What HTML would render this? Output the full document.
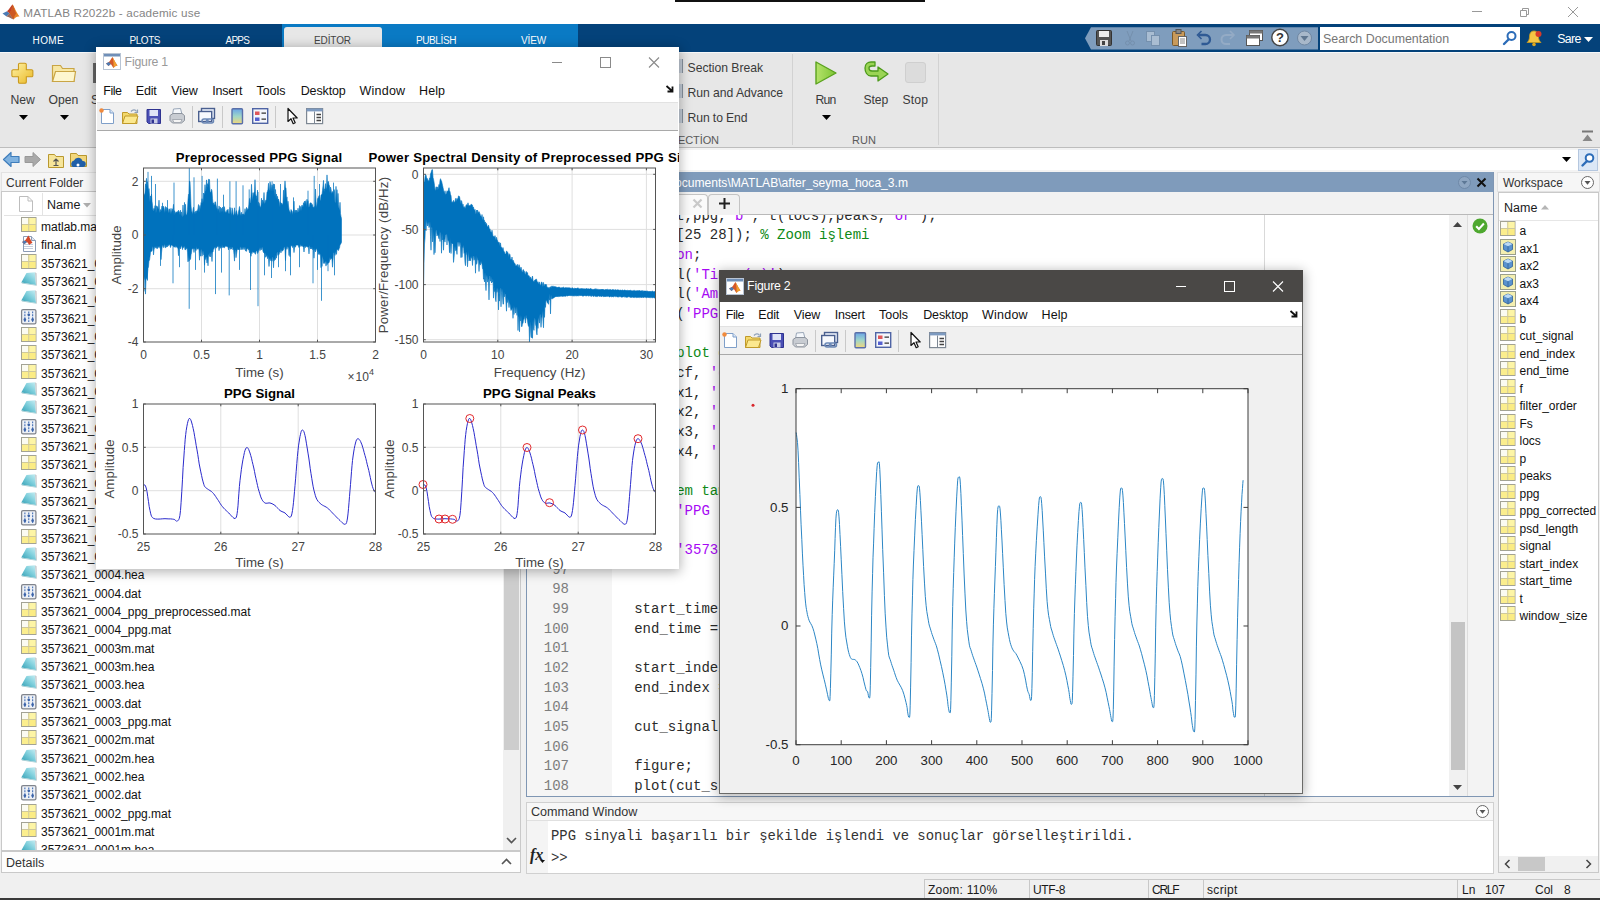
<!DOCTYPE html>
<html><head><meta charset="utf-8"><title>MATLAB R2022b - academic use</title>
<style>
html,body{margin:0;padding:0}
body{width:1600px;height:900px;overflow:hidden;position:relative;background:#f0f0f0;font-family:"Liberation Sans",sans-serif;font-size:12px;color:#1a1a1a}
.a{position:absolute}
.t{position:absolute;white-space:pre;line-height:14px}
svg{position:absolute;overflow:visible}

#titlebar{left:0;top:0;width:1600px;height:24px;background:#fff}
#tabstrip{left:0;top:24px;width:1600px;height:27.5px;background:#04427a}
#ctx{left:282px;top:24px;width:296px;height:27.5px;background:#0a7ac4}
#edtab{left:284px;top:27px;width:98px;height:24.5px;background:#e7e7e7;border-radius:3px 3px 0 0}
.tab{color:#fff}
#toolstrip{left:0;top:51.5px;width:1600px;height:94.5px;background:#e7e7e7;border-top:1px solid #f6f8fa;border-bottom:1px solid #bdbdbd;box-sizing:content-box}
.tsl{font-size:12.2px;color:#3a3a3a}
.grp{font-size:11px;color:#5a5a5a}
#addr{left:0;top:148px;width:1600px;height:24px;background:#f3f3f3}
#addrfield{left:96px;top:150px;width:1482px;height:20px;background:#fff}
#status{left:0;top:874px;width:1600px;height:24px;background:#f0f0f0}
#bottomline{left:0;top:898px;width:1600px;height:2px;background:#3a3a3a}
.sb{top:878.5px;height:19.5px;border-left:1px solid #c8c8c8;border-top:1px solid #c8c8c8;box-sizing:border-box}


.pan{background:#fff;border:1px solid #c9c9c9;box-sizing:border-box}
.phead{background:#f6f6f6;border:1px solid #e2e2e2;box-sizing:border-box}
.fn{font-size:12px;color:#111}
.code{font-family:"Liberation Mono",monospace;font-size:14px;color:#2a2a2a;line-height:16px}
.ln{font-family:"Liberation Mono",monospace;font-size:14px;color:#7d7d7d;line-height:16px;text-align:right;width:50px}
.s{color:#a709f5}.c{color:#0e8a16}
.cw{font-family:"Liberation Mono",monospace;font-size:13.88px;color:#333;line-height:16px}


.fw{box-shadow:0 2px 11px 1px rgba(0,0,0,.30);box-sizing:border-box}
.mn{font-size:12.5px;color:#111}
.tk{font-size:12px;fill:#444;font-family:"Liberation Sans",sans-serif}
.tk2{font-size:13.3px;fill:#262626;font-family:"Liberation Sans",sans-serif}
.lb{font-size:13.3px;fill:#444;font-family:"Liberation Sans",sans-serif}
.tt{font-size:13.2px;font-weight:bold;fill:#000;font-family:"Liberation Sans",sans-serif}

</style></head><body>
<div class="a" id="titlebar"></div>
<div class="a" style="left:675px;top:0;width:250px;height:2px;background:#111"></div>
<svg class="a" style="left:2px;top:4px" width="18.0" height="16.0" viewBox="0 0 18 16">
<path d="M0.5 9.5 L5 7.2 L7.5 9.3 L4.5 12.5 Z" fill="#4b7bb5"/>
<path d="M5 7.2 C7.5 5 9 2 10.5 0.5 C11.5 1.5 12.5 5 14 9 L7.5 9.3 Z" fill="#c2402a"/>
<path d="M10.5 0.5 C12 2 13.5 7 17.5 12.5 C15 12 13 13.5 11.5 15.5 C10 13.5 8.5 11.5 7.5 9.3 C9.5 7 10 3 10.5 0.5 Z" fill="#e8862a"/>
<path d="M10.5 0.5 C11.6 2.5 12.8 7 14.2 9.6 C12.8 11 12 13.5 11.5 15.5 C10 13.5 8.5 11.5 7.5 9.3 C9.5 7 10 3 10.5 0.5 Z" fill="#b5341f" opacity="0.55"/>
<path d="M4.5 12.5 L7.5 9.3 C8.5 11.5 10 13.5 11.5 15.5 C9 14.5 7 12.8 4.5 12.5Z" fill="#6a2b1a" opacity="0.7"/>
</svg>
<div class="t " style="left:23.3px;top:5.8px;font-size:11.7px;letter-spacing:0.158px;color:#858585;">MATLAB R2022b - academic use</div>
<svg class="a" style="left:1460px;top:0" width="140" height="24" viewBox="0 0 140 24">
<path d="M12 11.5H22" stroke="#999" stroke-width="1"/>
<path d="M60.5 10.5h6v6h-6zM62.5 10.5v-2h6v6h-2" stroke="#999" fill="none" stroke-width="1"/>
<path d="M108 7l10 10M118 7l-10 10" stroke="#999" stroke-width="1"/>
</svg>
<div class="a" id="tabstrip"></div><div class="a" id="ctx"></div><div class="a" id="edtab"></div>
<div class="t tab" style="left:32.6px;top:33.5px;font-size:10px;letter-spacing:0.35px;">HOME</div>
<div class="t tab" style="left:129.6px;top:33.5px;font-size:10px;letter-spacing:-0.479px;">PLOTS</div>
<div class="t tab" style="left:225.6px;top:33.5px;font-size:10px;letter-spacing:-0.822px;">APPS</div>
<div class="t tab" style="left:314px;top:33.5px;font-size:10px;letter-spacing:-0.102px;color:#444;">EDİTOR</div>
<div class="t tab" style="left:416px;top:33.5px;font-size:10px;letter-spacing:-0.4px;">PUBLİSH</div>
<div class="t tab" style="left:521px;top:33.5px;font-size:10px;letter-spacing:-0.141px;">VİEW</div>
<svg class="a" style="left:1084px;top:26px" width="234" height="24" viewBox="0 0 234 24">
<path d="M7 1.200H234V23.500H7L1 12.300Z" fill="#7f9dbd"/>
<!-- save -->
<g transform="translate(12,4)"><rect x="0.5" y="0.5" width="15" height="15" rx="1" fill="#555" stroke="#333"/><rect x="3" y="1" width="10" height="6" fill="#eee"/><rect x="4" y="10" width="8" height="6" fill="#ddd"/><rect x="6" y="11" width="3" height="4" fill="#444"/></g>
<!-- cut -->
<g transform="translate(38,4)" stroke="#7590ad" fill="none"><path d="M5 1L9 11M11 1L7 11"/><circle cx="5.5" cy="13" r="2"/><circle cx="10.5" cy="13" r="2"/></g>
<!-- copy -->
<g transform="translate(61,4)" stroke="#7590ad" fill="#a9bdd2"><rect x="1.5" y="1.5" width="8" height="10"/><rect x="6.5" y="5.5" width="8" height="10"/></g>
<!-- paste -->
<g transform="translate(87,3)"><rect x="1.5" y="2.5" width="12" height="14" rx="1" fill="#c89a5b" stroke="#7a5a2a"/><rect x="5" y="0.5" width="5" height="4" fill="#888" stroke="#555"/><rect x="7.5" y="7.5" width="8" height="10" fill="#fff" stroke="#666"/><path d="M9 10h5M9 12h5M9 14h5" stroke="#888"/></g>
<!-- undo -->
<g transform="translate(111.500,4)" fill="none" stroke="#2f5a94" stroke-width="2.300"><path d="M3 5H10A4 4 0 0 1 10 14H6"/><path d="M6 1L2 5L6 9" stroke-width="1.6"/></g>
<!-- redo -->
<g transform="translate(136,4)" fill="none" stroke="#94abc5" stroke-width="2"><path d="M13 5H6A4 4 0 0 0 6 14H10"/><path d="M10 1L14 5L10 9" stroke-width="1.6"/></g>
<!-- windows -->
<g transform="translate(162,3)"><rect x="3.5" y="1.5" width="13" height="10" fill="#fff" stroke="#555"/><rect x="3.5" y="1.5" width="13" height="3" fill="#777"/><rect x="0.5" y="6.5" width="13" height="10" fill="#fff" stroke="#555"/><rect x="0.5" y="6.5" width="13" height="3" fill="#777"/></g>
<!-- help -->
<g transform="translate(187,2.500)"><circle cx="9" cy="9" r="8.2" fill="#fff" stroke="#444" stroke-width="1.4"/><text x="9" y="13.5" font-family="Liberation Sans,sans-serif" font-weight="bold" font-size="13" text-anchor="middle" fill="#333">?</text></g>
<!-- dropdown -->
<g transform="translate(213,4.500)"><circle cx="7.5" cy="7.5" r="7" fill="#a8b8ca" stroke="#6f87a3"/><path d="M3.5 5.5h8l-4 5z" fill="#5f7690"/></g>
</svg>
<div class="a" style="left:1319.5px;top:27px;width:200px;height:22.7px;background:#fff"></div>
<div class="t" style="left:1323px;top:32px;font-size:12.4px;color:#767676">Search Documentation</div>
<svg class="a" style="left:1502px;top:30px" width="16" height="16" viewBox="0 0 16 16"><circle cx="9.5" cy="6" r="4" fill="#fff" stroke="#2c6cb8" stroke-width="2"/><path d="M6.5 9.5L2 14" stroke="#2c6cb8" stroke-width="2.4" stroke-linecap="round"/></svg>
<svg class="a" style="left:1525px;top:29px" width="20" height="20" viewBox="0 0 20 20"><path d="M9 2C5.5 2 4.5 5 4.5 8C4.5 11 3 12.5 2 13.5H16C15 12.5 13.5 11 13.5 8C13.5 5 12.5 2 9 2Z" fill="#f6c544" stroke="#c99a1c" stroke-width="0.8"/><circle cx="9" cy="15.5" r="1.8" fill="#e0a820"/><circle cx="13.5" cy="5" r="3" fill="#d83a2a"/></svg>
<div class="t " style="left:1557.2px;top:32.3px;font-size:12.3px;letter-spacing:-0.596px;color:#fff;">Sare</div>
<svg class="a" style="left:1584px;top:37px" width="9" height="5" viewBox="0 0 9 5"><path d="M0 0H9L4.5 5Z" fill="#fff"/></svg>
<div class="a" id="toolstrip"></div>
<svg class="a" style="left:10.5px;top:60.5px" width="24.5" height="24.5" viewBox="0 0 28 28"><defs><linearGradient id="gp" x1="0" y1="0" x2="1" y2="1"><stop offset="0" stop-color="#fff3a8"/><stop offset="1" stop-color="#e9b824"/></linearGradient></defs><path d="M10 2.5h6a1.5 1.5 0 0 1 1.5 1.5v6h6a1.5 1.5 0 0 1 1.5 1.5v5a1.5 1.5 0 0 1-1.5 1.5h-6v6a1.5 1.5 0 0 1-1.5 1.5h-6a1.5 1.5 0 0 1-1.5-1.5v-6h-6a1.5 1.5 0 0 1-1.5-1.5v-5a1.5 1.5 0 0 1 1.5-1.5h6v-6a1.5 1.5 0 0 1 1.5-1.5z" fill="url(#gp)" stroke="#c9981a" stroke-width="1.2"/></svg>
<div class="t tsl" style="left:10.4px;top:93px;font-size:12.2px;letter-spacing:0.07px;">New</div>
<svg class="a" style="left:18.5px;top:114.5px" width="9" height="5" viewBox="0 0 9 5"><path d="M0 0H9L4.5 5Z" fill="#000"/></svg>
<svg class="a" style="left:51px;top:62px" width="26" height="22" viewBox="0 0 26 22"><path d="M1.5 3.5h8l2 3h11.5v13h-21.5z" fill="#f7e7a4" stroke="#c9a545" stroke-width="1.2"/><path d="M1.5 19.5l3-10h20l-1.5 10z" fill="#fdf6cf" stroke="#c9a545" stroke-width="1.2"/></svg>
<div class="t tsl" style="left:48.6px;top:93px;font-size:12.2px;letter-spacing:-0.007px;">Open</div>
<svg class="a" style="left:59.5px;top:114.5px" width="9" height="5" viewBox="0 0 9 5"><path d="M0 0H9L4.5 5Z" fill="#000"/></svg>
<div class="a" style="left:93px;top:63px;width:3px;height:20px;background:#666"></div>
<div class="t tsl" style="left:91px;top:93px">S</div>
<div class="a" style="left:679px;top:59px;width:3px;height:14px;background:#c3ccd8;border-right:1px solid #8893a0"></div>
<div class="a" style="left:679px;top:84px;width:3px;height:14px;background:#c3ccd8;border-right:1px solid #8893a0"></div>
<div class="a" style="left:679px;top:109px;width:3px;height:14px;background:#c3ccd8;border-right:1px solid #8893a0"></div>
<div class="t tsl" style="left:687.6px;top:61px;font-size:12.2px;letter-spacing:-0.037px;">Section Break</div>
<div class="t tsl" style="left:687.6px;top:86px;font-size:12.2px;letter-spacing:-0.056px;">Run and Advance</div>
<div class="t tsl" style="left:687.6px;top:111px;font-size:12.2px;letter-spacing:-0.118px;">Run to End</div>
<div class="t grp" style="left:678px;top:132.5px;letter-spacing:-0.1px">ECTİON</div>
<div class="a" style="left:792px;top:54px;width:1px;height:91px;background:#d2d2d2"></div>
<svg class="a" style="left:814px;top:60px" width="24" height="26" viewBox="0 0 24 26"><defs><linearGradient id="gg" x1="0" y1="0" x2="1" y2="0"><stop offset="0" stop-color="#b5e36a"/><stop offset="1" stop-color="#7dc434"/></linearGradient></defs><path d="M2 2L22 13L2 24Z" fill="url(#gg)" stroke="#5aa21e" stroke-width="1.4" stroke-linejoin="round"/></svg>
<div class="t tsl" style="left:815.6px;top:93px;font-size:12.2px;letter-spacing:-0.786px;">Run</div>
<svg class="a" style="left:821.5px;top:114.5px" width="9" height="5" viewBox="0 0 9 5"><path d="M0 0H9L4.5 5Z" fill="#000"/></svg>
<svg class="a" style="left:862px;top:60px" width="28" height="24" viewBox="0 0 28 24"><path d="M3 8C3 4 6 2 9 2H13V6H10C8 6 7 7 7 8C7 10 8 11 10 11H16V7L26 14L16 21V16H9C5 16 3 12 3 8Z" fill="#9bd455" stroke="#4d9a1c" stroke-width="1.3" stroke-linejoin="round"/></svg>
<div class="t tsl" style="left:863.6px;top:93px;font-size:12.2px;letter-spacing:-0.17px;">Step</div>
<div class="a" style="left:905px;top:62px;width:21px;height:21px;border-radius:3px;background:#dcdcdc;border:1px solid #cfcfcf;box-sizing:border-box"></div>
<div class="t tsl" style="left:902.6px;top:93px;font-size:12.2px;letter-spacing:0.08px;">Stop</div>
<div class="t grp" style="left:852px;top:133px">RUN</div>
<div class="a" style="left:938px;top:54px;width:1px;height:91px;background:#d2d2d2"></div>
<svg class="a" style="left:1581px;top:130px" width="13" height="13" viewBox="0 0 13 13"><path d="M1 1.5h11" stroke="#777" stroke-width="2"/><path d="M1.5 11L6.5 4.5L11.5 11Z" fill="#888"/></svg>
<div class="a" id="addr"></div><div class="a" id="addrfield"></div>
<svg class="a" style="left:2px;top:150px" width="92" height="20" viewBox="0 0 92 20">
<path d="M1.5 9.5L9 2.5V6.5H17V12.5H9V16.5Z" fill="#7fb2e0" stroke="#3f7dbb" stroke-width="1.2" stroke-linejoin="round"/>
<path d="M38.500 9.5L31 2.500V6.500H23V12.500H31V16.500Z" fill="#a9a9a9" stroke="#999" stroke-width="1"/>
<g transform="translate(46,2)"><path d="M0.500 2.500h6l1.500 2h7.500v11h-15z" fill="#f6e59a" stroke="#b9982f"/><path d="M8 7v6M5.500 9.500L8 7l2.500 2.500M5.500 13.500h5" stroke="#555" fill="none" stroke-width="1.200"/></g>
<g transform="translate(68,1)"><path d="M0.500 2.500h6l1.500 2h8.500v11h-16z" fill="#f2d77c" stroke="#b9982f"/><path d="M3 16a3.500 3.500 0 0 1 1-6.500a4.500 4.500 0 0 1 8.500 0.500a3 3 0 0 1 0.500 6z" fill="#1f5fa8"/><circle cx="8" cy="14" r="1.500" fill="#fff"/></g>
</svg>
<svg class="a" style="left:1562px;top:157px" width="9" height="5" viewBox="0 0 9 5"><path d="M0 0H9L4.5 5Z" fill="#000"/></svg>
<div class="a" style="left:1578px;top:149px;width:20px;height:22px;background:#dbe7f6;border:1px solid #b5c7df;box-sizing:border-box"></div>
<svg class="a" style="left:1580px;top:152px" width="16" height="16" viewBox="0 0 16 16"><circle cx="9.500" cy="6" r="3.800" fill="#fff" stroke="#2c6cb8" stroke-width="2"/><path d="M6.500 9.500L2.500 13.500" stroke="#2c6cb8" stroke-width="2.400" stroke-linecap="round"/></svg>
<div class="a" id="status"></div>
<div class="a sb" style="left:924px;width:105px"></div>
<div class="t " style="left:928px;top:883px;font-size:12px;letter-spacing:0.224px;">Zoom: 110%</div>
<div class="a sb" style="left:1029px;width:119px"></div>
<div class="t " style="left:1033px;top:883px;font-size:12px;letter-spacing:-0.4px;">UTF-8</div>
<div class="a sb" style="left:1148px;width:55px"></div>
<div class="t " style="left:1152px;top:883px;font-size:12px;letter-spacing:-1.286px;">CRLF</div>
<div class="a sb" style="left:1203px;width:254px"></div>
<div class="t " style="left:1207px;top:883px;font-size:12px;letter-spacing:0.321px;">script</div>
<div class="a sb" style="left:1457px;width:143px"></div>
<div class="t" style="left:1462px;top:883px">Ln</div><div class="t" style="left:1485px;top:883px">107</div><div class="t" style="left:1535px;top:883px">Col</div><div class="t" style="left:1564px;top:883px">8</div>
<div class="a" id="bottomline"></div>
<svg class="a" width="0" height="0"><defs><linearGradient id="hg" x1="1" y1="0" x2="0" y2="1"><stop offset="0" stop-color="#c9eef3"/><stop offset="0.450" stop-color="#7fcfdc"/><stop offset="1" stop-color="#2f9db3"/></linearGradient></defs></svg>
<div class="a phead" style="left:1px;top:172px;width:520px;height:20px"></div>
<div class="t" style="left:6px;top:176px;font-size:12px;color:#333">Current Folder</div>
<div class="a pan" style="left:1px;top:191px;width:520px;height:660px"></div>
<div class="a" style="left:4px;top:215px;width:499px;height:1px;background:#e3e3e3"></div>
<div class="a" style="left:42px;top:193px;width:1px;height:22px;background:#e3e3e3"></div>
<svg class="a" style="left:19px;top:196px" width="14" height="16" viewBox="0 0 14 16"><path d="M0.500 0.500h8.500l4.500 4.500v10.500h-13z" fill="#fff" stroke="#bdbdbd"/><path d="M9 0.500v4.500h4.500" fill="none" stroke="#bdbdbd"/></svg>
<div class="t" style="left:47px;top:198px;font-size:12.5px">Name</div>
<svg class="a" style="left:83px;top:203px" width="8" height="5" viewBox="0 0 8 5"><path d="M0 0h8l-4 4.500z" fill="#b0b0b0"/></svg>
<div class="a" style="left:4px;top:216px;width:499px;height:634px;overflow:hidden">
<svg class="a" style="left:17px;top:1.0px" width="15.5" height="15" viewBox="0 0 15.5 15"><rect x="0.5" y="0.5" width="14.5" height="14" fill="#fbef96" stroke="#a3a394"/><rect x="1" y="1" width="6.200" height="6" fill="#fbfbf2"/><rect x="8.300" y="1" width="6.200" height="6" fill="#fdf5a6"/><rect x="1" y="8" width="6.200" height="6" fill="#fbee8e"/><rect x="8.300" y="8" width="6.200" height="6" fill="#fbec84"/><path d="M7.750 1V14M1 7.500H14.500" stroke="#cfc99c" stroke-width="1"/></svg>
<div class="t fn" style="left:37px;top:3.9px">matlab.mat</div>
<svg class="a" style="left:17px;top:19.3px" width="16" height="17" viewBox="0 0 16 17"><path d="M2.500 1.500h8l4 4v11h-12z" fill="#fff" stroke="#8b9bb5"/><path d="M10.500 1.500v4h4" fill="#dfe6f2" stroke="#8b9bb5"/><path d="M3 11.500h9M3 13.500h9M3 9.500h9" stroke="#c5cedd"/><path d="M1 7L4 5.500C5.500 4 6.500 1.500 7.500 0.500C8.500 2 9.500 5 11.500 8C10 8 9 9 8.500 10C7.500 9 6.500 7.500 6 7L3.500 9Z" fill="#d4482a"/><path d="M1 7L4 5.500L6 7L3.500 9Z" fill="#4b7bb5"/></svg>
<div class="t fn" style="left:37px;top:22.2px">final.m</div>
<svg class="a" style="left:17px;top:37.7px" width="15.5" height="15" viewBox="0 0 15.5 15"><rect x="0.5" y="0.5" width="14.5" height="14" fill="#fbef96" stroke="#a3a394"/><rect x="1" y="1" width="6.200" height="6" fill="#fbfbf2"/><rect x="8.300" y="1" width="6.200" height="6" fill="#fdf5a6"/><rect x="1" y="8" width="6.200" height="6" fill="#fbee8e"/><rect x="8.300" y="8" width="6.200" height="6" fill="#fbec84"/><path d="M7.750 1V14M1 7.500H14.500" stroke="#cfc99c" stroke-width="1"/></svg>
<div class="t fn" style="left:37px;top:40.6px">3573621_0007m.mat</div>
<svg class="a" style="left:17px;top:56.0px" width="16" height="15" viewBox="0 0 16 15"><path d="M5.500 1L14 0.300L15 13L0.300 10.500Z" fill="url(#hg)"/><path d="M14 0.300L15.600 1.200L15.900 13.800L15 13Z" fill="#c4c9cc"/><path d="M0.300 10.500L15 13L15.900 13.800L1 11.500Z" fill="#9fc9d0"/></svg>
<div class="t fn" style="left:37px;top:58.9px">3573621_0007m.hea</div>
<svg class="a" style="left:17px;top:74.3px" width="16" height="15" viewBox="0 0 16 15"><path d="M5.500 1L14 0.300L15 13L0.300 10.500Z" fill="url(#hg)"/><path d="M14 0.300L15.600 1.200L15.900 13.800L15 13Z" fill="#c4c9cc"/><path d="M0.300 10.500L15 13L15.900 13.800L1 11.500Z" fill="#9fc9d0"/></svg>
<div class="t fn" style="left:37px;top:77.2px">3573621_0007.hea</div>
<svg class="a" style="left:17px;top:92.6px" width="15.5" height="15.5" viewBox="0 0 16 16"><rect x="0.6" y="0.6" width="14.800" height="14.800" rx="1.500" fill="#eef1f6" stroke="#80848c" stroke-width="1.300"/><path d="M4 2.500v11M8 2.500v11M12 2.500v11" stroke="#4a74b8" stroke-width="1.200" stroke-dasharray="2 1"/><circle cx="4" cy="11" r="1.400" fill="#3a62a8"/><circle cx="8" cy="6" r="1.400" fill="#3a62a8"/><circle cx="12" cy="11" r="1.400" fill="#3a62a8"/></svg>
<div class="t fn" style="left:37px;top:95.5px">3573621_0007.dat</div>
<svg class="a" style="left:17px;top:111.0px" width="15.5" height="15" viewBox="0 0 15.5 15"><rect x="0.5" y="0.5" width="14.5" height="14" fill="#fbef96" stroke="#a3a394"/><rect x="1" y="1" width="6.200" height="6" fill="#fbfbf2"/><rect x="8.300" y="1" width="6.200" height="6" fill="#fdf5a6"/><rect x="1" y="8" width="6.200" height="6" fill="#fbee8e"/><rect x="8.300" y="8" width="6.200" height="6" fill="#fbec84"/><path d="M7.750 1V14M1 7.500H14.500" stroke="#cfc99c" stroke-width="1"/></svg>
<div class="t fn" style="left:37px;top:113.9px">3573621_0007_ppg.mat</div>
<svg class="a" style="left:17px;top:129.3px" width="15.5" height="15" viewBox="0 0 15.5 15"><rect x="0.5" y="0.5" width="14.5" height="14" fill="#fbef96" stroke="#a3a394"/><rect x="1" y="1" width="6.200" height="6" fill="#fbfbf2"/><rect x="8.300" y="1" width="6.200" height="6" fill="#fdf5a6"/><rect x="1" y="8" width="6.200" height="6" fill="#fbee8e"/><rect x="8.300" y="8" width="6.200" height="6" fill="#fbec84"/><path d="M7.750 1V14M1 7.500H14.500" stroke="#cfc99c" stroke-width="1"/></svg>
<div class="t fn" style="left:37px;top:132.2px">3573621_0006m.mat</div>
<svg class="a" style="left:17px;top:147.6px" width="15.5" height="15" viewBox="0 0 15.5 15"><rect x="0.5" y="0.5" width="14.5" height="14" fill="#fbef96" stroke="#a3a394"/><rect x="1" y="1" width="6.200" height="6" fill="#fbfbf2"/><rect x="8.300" y="1" width="6.200" height="6" fill="#fdf5a6"/><rect x="1" y="8" width="6.200" height="6" fill="#fbee8e"/><rect x="8.300" y="8" width="6.200" height="6" fill="#fbec84"/><path d="M7.750 1V14M1 7.500H14.500" stroke="#cfc99c" stroke-width="1"/></svg>
<div class="t fn" style="left:37px;top:150.5px">3573621_0006_ppg.mat</div>
<svg class="a" style="left:17px;top:166.0px" width="16" height="15" viewBox="0 0 16 15"><path d="M5.500 1L14 0.300L15 13L0.300 10.500Z" fill="url(#hg)"/><path d="M14 0.300L15.600 1.200L15.900 13.800L15 13Z" fill="#c4c9cc"/><path d="M0.300 10.500L15 13L15.900 13.800L1 11.500Z" fill="#9fc9d0"/></svg>
<div class="t fn" style="left:37px;top:168.9px">3573621_0006m.hea</div>
<svg class="a" style="left:17px;top:184.3px" width="16" height="15" viewBox="0 0 16 15"><path d="M5.500 1L14 0.300L15 13L0.300 10.500Z" fill="url(#hg)"/><path d="M14 0.300L15.600 1.200L15.900 13.800L15 13Z" fill="#c4c9cc"/><path d="M0.300 10.500L15 13L15.900 13.800L1 11.500Z" fill="#9fc9d0"/></svg>
<div class="t fn" style="left:37px;top:187.2px">3573621_0006.hea</div>
<svg class="a" style="left:17px;top:202.6px" width="15.5" height="15.5" viewBox="0 0 16 16"><rect x="0.6" y="0.6" width="14.800" height="14.800" rx="1.500" fill="#eef1f6" stroke="#80848c" stroke-width="1.300"/><path d="M4 2.500v11M8 2.500v11M12 2.500v11" stroke="#4a74b8" stroke-width="1.200" stroke-dasharray="2 1"/><circle cx="4" cy="11" r="1.400" fill="#3a62a8"/><circle cx="8" cy="6" r="1.400" fill="#3a62a8"/><circle cx="12" cy="11" r="1.400" fill="#3a62a8"/></svg>
<div class="t fn" style="left:37px;top:205.5px">3573621_0006.dat</div>
<svg class="a" style="left:17px;top:221.0px" width="15.5" height="15" viewBox="0 0 15.5 15"><rect x="0.5" y="0.5" width="14.5" height="14" fill="#fbef96" stroke="#a3a394"/><rect x="1" y="1" width="6.200" height="6" fill="#fbfbf2"/><rect x="8.300" y="1" width="6.200" height="6" fill="#fdf5a6"/><rect x="1" y="8" width="6.200" height="6" fill="#fbee8e"/><rect x="8.300" y="8" width="6.200" height="6" fill="#fbec84"/><path d="M7.750 1V14M1 7.500H14.500" stroke="#cfc99c" stroke-width="1"/></svg>
<div class="t fn" style="left:37px;top:223.9px">3573621_0005m.mat</div>
<svg class="a" style="left:17px;top:239.3px" width="15.5" height="15" viewBox="0 0 15.5 15"><rect x="0.5" y="0.5" width="14.5" height="14" fill="#fbef96" stroke="#a3a394"/><rect x="1" y="1" width="6.200" height="6" fill="#fbfbf2"/><rect x="8.300" y="1" width="6.200" height="6" fill="#fdf5a6"/><rect x="1" y="8" width="6.200" height="6" fill="#fbee8e"/><rect x="8.300" y="8" width="6.200" height="6" fill="#fbec84"/><path d="M7.750 1V14M1 7.500H14.500" stroke="#cfc99c" stroke-width="1"/></svg>
<div class="t fn" style="left:37px;top:242.2px">3573621_0005_ppg.mat</div>
<svg class="a" style="left:17px;top:257.6px" width="16" height="15" viewBox="0 0 16 15"><path d="M5.500 1L14 0.300L15 13L0.300 10.500Z" fill="url(#hg)"/><path d="M14 0.300L15.600 1.200L15.900 13.800L15 13Z" fill="#c4c9cc"/><path d="M0.300 10.500L15 13L15.900 13.800L1 11.500Z" fill="#9fc9d0"/></svg>
<div class="t fn" style="left:37px;top:260.5px">3573621_0005m.hea</div>
<svg class="a" style="left:17px;top:275.9px" width="16" height="15" viewBox="0 0 16 15"><path d="M5.500 1L14 0.300L15 13L0.300 10.500Z" fill="url(#hg)"/><path d="M14 0.300L15.600 1.200L15.900 13.800L15 13Z" fill="#c4c9cc"/><path d="M0.300 10.500L15 13L15.900 13.800L1 11.500Z" fill="#9fc9d0"/></svg>
<div class="t fn" style="left:37px;top:278.9px">3573621_0005.hea</div>
<svg class="a" style="left:17px;top:294.3px" width="15.5" height="15.5" viewBox="0 0 16 16"><rect x="0.6" y="0.6" width="14.800" height="14.800" rx="1.500" fill="#eef1f6" stroke="#80848c" stroke-width="1.300"/><path d="M4 2.500v11M8 2.500v11M12 2.500v11" stroke="#4a74b8" stroke-width="1.200" stroke-dasharray="2 1"/><circle cx="4" cy="11" r="1.400" fill="#3a62a8"/><circle cx="8" cy="6" r="1.400" fill="#3a62a8"/><circle cx="12" cy="11" r="1.400" fill="#3a62a8"/></svg>
<div class="t fn" style="left:37px;top:297.2px">3573621_0005.dat</div>
<svg class="a" style="left:17px;top:312.6px" width="15.5" height="15" viewBox="0 0 15.5 15"><rect x="0.5" y="0.5" width="14.5" height="14" fill="#fbef96" stroke="#a3a394"/><rect x="1" y="1" width="6.200" height="6" fill="#fbfbf2"/><rect x="8.300" y="1" width="6.200" height="6" fill="#fdf5a6"/><rect x="1" y="8" width="6.200" height="6" fill="#fbee8e"/><rect x="8.300" y="8" width="6.200" height="6" fill="#fbec84"/><path d="M7.750 1V14M1 7.500H14.500" stroke="#cfc99c" stroke-width="1"/></svg>
<div class="t fn" style="left:37px;top:315.5px">3573621_0004m.mat</div>
<svg class="a" style="left:17px;top:330.9px" width="16" height="15" viewBox="0 0 16 15"><path d="M5.500 1L14 0.300L15 13L0.300 10.500Z" fill="url(#hg)"/><path d="M14 0.300L15.600 1.200L15.900 13.800L15 13Z" fill="#c4c9cc"/><path d="M0.300 10.500L15 13L15.900 13.800L1 11.500Z" fill="#9fc9d0"/></svg>
<div class="t fn" style="left:37px;top:333.8px">3573621_0004m.hea</div>
<svg class="a" style="left:17px;top:349.3px" width="16" height="15" viewBox="0 0 16 15"><path d="M5.500 1L14 0.300L15 13L0.300 10.500Z" fill="url(#hg)"/><path d="M14 0.300L15.600 1.200L15.900 13.800L15 13Z" fill="#c4c9cc"/><path d="M0.300 10.500L15 13L15.900 13.800L1 11.500Z" fill="#9fc9d0"/></svg>
<div class="t fn" style="left:37px;top:352.2px">3573621_0004.hea</div>
<svg class="a" style="left:17px;top:367.6px" width="15.5" height="15.5" viewBox="0 0 16 16"><rect x="0.6" y="0.6" width="14.800" height="14.800" rx="1.500" fill="#eef1f6" stroke="#80848c" stroke-width="1.300"/><path d="M4 2.500v11M8 2.500v11M12 2.500v11" stroke="#4a74b8" stroke-width="1.200" stroke-dasharray="2 1"/><circle cx="4" cy="11" r="1.400" fill="#3a62a8"/><circle cx="8" cy="6" r="1.400" fill="#3a62a8"/><circle cx="12" cy="11" r="1.400" fill="#3a62a8"/></svg>
<div class="t fn" style="left:37px;top:370.5px">3573621_0004.dat</div>
<svg class="a" style="left:17px;top:385.9px" width="15.5" height="15" viewBox="0 0 15.5 15"><rect x="0.5" y="0.5" width="14.5" height="14" fill="#fbef96" stroke="#a3a394"/><rect x="1" y="1" width="6.200" height="6" fill="#fbfbf2"/><rect x="8.300" y="1" width="6.200" height="6" fill="#fdf5a6"/><rect x="1" y="8" width="6.200" height="6" fill="#fbee8e"/><rect x="8.300" y="8" width="6.200" height="6" fill="#fbec84"/><path d="M7.750 1V14M1 7.500H14.500" stroke="#cfc99c" stroke-width="1"/></svg>
<div class="t fn" style="left:37px;top:388.8px">3573621_0004_ppg_preprocessed.mat</div>
<svg class="a" style="left:17px;top:404.3px" width="15.5" height="15" viewBox="0 0 15.5 15"><rect x="0.5" y="0.5" width="14.5" height="14" fill="#fbef96" stroke="#a3a394"/><rect x="1" y="1" width="6.200" height="6" fill="#fbfbf2"/><rect x="8.300" y="1" width="6.200" height="6" fill="#fdf5a6"/><rect x="1" y="8" width="6.200" height="6" fill="#fbee8e"/><rect x="8.300" y="8" width="6.200" height="6" fill="#fbec84"/><path d="M7.750 1V14M1 7.500H14.500" stroke="#cfc99c" stroke-width="1"/></svg>
<div class="t fn" style="left:37px;top:407.2px">3573621_0004_ppg.mat</div>
<svg class="a" style="left:17px;top:422.6px" width="15.5" height="15" viewBox="0 0 15.5 15"><rect x="0.5" y="0.5" width="14.5" height="14" fill="#fbef96" stroke="#a3a394"/><rect x="1" y="1" width="6.200" height="6" fill="#fbfbf2"/><rect x="8.300" y="1" width="6.200" height="6" fill="#fdf5a6"/><rect x="1" y="8" width="6.200" height="6" fill="#fbee8e"/><rect x="8.300" y="8" width="6.200" height="6" fill="#fbec84"/><path d="M7.750 1V14M1 7.500H14.500" stroke="#cfc99c" stroke-width="1"/></svg>
<div class="t fn" style="left:37px;top:425.5px">3573621_0003m.mat</div>
<svg class="a" style="left:17px;top:440.9px" width="16" height="15" viewBox="0 0 16 15"><path d="M5.500 1L14 0.300L15 13L0.300 10.500Z" fill="url(#hg)"/><path d="M14 0.300L15.600 1.200L15.900 13.800L15 13Z" fill="#c4c9cc"/><path d="M0.300 10.500L15 13L15.900 13.800L1 11.500Z" fill="#9fc9d0"/></svg>
<div class="t fn" style="left:37px;top:443.8px">3573621_0003m.hea</div>
<svg class="a" style="left:17px;top:459.2px" width="16" height="15" viewBox="0 0 16 15"><path d="M5.500 1L14 0.300L15 13L0.300 10.500Z" fill="url(#hg)"/><path d="M14 0.300L15.600 1.200L15.900 13.800L15 13Z" fill="#c4c9cc"/><path d="M0.300 10.500L15 13L15.900 13.800L1 11.500Z" fill="#9fc9d0"/></svg>
<div class="t fn" style="left:37px;top:462.1px">3573621_0003.hea</div>
<svg class="a" style="left:17px;top:477.6px" width="15.5" height="15.5" viewBox="0 0 16 16"><rect x="0.6" y="0.6" width="14.800" height="14.800" rx="1.500" fill="#eef1f6" stroke="#80848c" stroke-width="1.300"/><path d="M4 2.500v11M8 2.500v11M12 2.500v11" stroke="#4a74b8" stroke-width="1.200" stroke-dasharray="2 1"/><circle cx="4" cy="11" r="1.400" fill="#3a62a8"/><circle cx="8" cy="6" r="1.400" fill="#3a62a8"/><circle cx="12" cy="11" r="1.400" fill="#3a62a8"/></svg>
<div class="t fn" style="left:37px;top:480.5px">3573621_0003.dat</div>
<svg class="a" style="left:17px;top:495.9px" width="15.5" height="15" viewBox="0 0 15.5 15"><rect x="0.5" y="0.5" width="14.5" height="14" fill="#fbef96" stroke="#a3a394"/><rect x="1" y="1" width="6.200" height="6" fill="#fbfbf2"/><rect x="8.300" y="1" width="6.200" height="6" fill="#fdf5a6"/><rect x="1" y="8" width="6.200" height="6" fill="#fbee8e"/><rect x="8.300" y="8" width="6.200" height="6" fill="#fbec84"/><path d="M7.750 1V14M1 7.500H14.500" stroke="#cfc99c" stroke-width="1"/></svg>
<div class="t fn" style="left:37px;top:498.8px">3573621_0003_ppg.mat</div>
<svg class="a" style="left:17px;top:514.2px" width="15.5" height="15" viewBox="0 0 15.5 15"><rect x="0.5" y="0.5" width="14.5" height="14" fill="#fbef96" stroke="#a3a394"/><rect x="1" y="1" width="6.200" height="6" fill="#fbfbf2"/><rect x="8.300" y="1" width="6.200" height="6" fill="#fdf5a6"/><rect x="1" y="8" width="6.200" height="6" fill="#fbee8e"/><rect x="8.300" y="8" width="6.200" height="6" fill="#fbec84"/><path d="M7.750 1V14M1 7.500H14.500" stroke="#cfc99c" stroke-width="1"/></svg>
<div class="t fn" style="left:37px;top:517.1px">3573621_0002m.mat</div>
<svg class="a" style="left:17px;top:532.6px" width="16" height="15" viewBox="0 0 16 15"><path d="M5.500 1L14 0.300L15 13L0.300 10.500Z" fill="url(#hg)"/><path d="M14 0.300L15.600 1.200L15.900 13.800L15 13Z" fill="#c4c9cc"/><path d="M0.300 10.500L15 13L15.900 13.800L1 11.500Z" fill="#9fc9d0"/></svg>
<div class="t fn" style="left:37px;top:535.5px">3573621_0002m.hea</div>
<svg class="a" style="left:17px;top:550.9px" width="16" height="15" viewBox="0 0 16 15"><path d="M5.500 1L14 0.300L15 13L0.300 10.500Z" fill="url(#hg)"/><path d="M14 0.300L15.600 1.200L15.900 13.800L15 13Z" fill="#c4c9cc"/><path d="M0.300 10.500L15 13L15.900 13.800L1 11.500Z" fill="#9fc9d0"/></svg>
<div class="t fn" style="left:37px;top:553.8px">3573621_0002.hea</div>
<svg class="a" style="left:17px;top:569.2px" width="15.5" height="15.5" viewBox="0 0 16 16"><rect x="0.6" y="0.6" width="14.800" height="14.800" rx="1.500" fill="#eef1f6" stroke="#80848c" stroke-width="1.300"/><path d="M4 2.500v11M8 2.500v11M12 2.500v11" stroke="#4a74b8" stroke-width="1.200" stroke-dasharray="2 1"/><circle cx="4" cy="11" r="1.400" fill="#3a62a8"/><circle cx="8" cy="6" r="1.400" fill="#3a62a8"/><circle cx="12" cy="11" r="1.400" fill="#3a62a8"/></svg>
<div class="t fn" style="left:37px;top:572.1px">3573621_0002.dat</div>
<svg class="a" style="left:17px;top:587.6px" width="15.5" height="15" viewBox="0 0 15.5 15"><rect x="0.5" y="0.5" width="14.5" height="14" fill="#fbef96" stroke="#a3a394"/><rect x="1" y="1" width="6.200" height="6" fill="#fbfbf2"/><rect x="8.300" y="1" width="6.200" height="6" fill="#fdf5a6"/><rect x="1" y="8" width="6.200" height="6" fill="#fbee8e"/><rect x="8.300" y="8" width="6.200" height="6" fill="#fbec84"/><path d="M7.750 1V14M1 7.500H14.500" stroke="#cfc99c" stroke-width="1"/></svg>
<div class="t fn" style="left:37px;top:590.5px">3573621_0002_ppg.mat</div>
<svg class="a" style="left:17px;top:605.9px" width="15.5" height="15" viewBox="0 0 15.5 15"><rect x="0.5" y="0.5" width="14.5" height="14" fill="#fbef96" stroke="#a3a394"/><rect x="1" y="1" width="6.200" height="6" fill="#fbfbf2"/><rect x="8.300" y="1" width="6.200" height="6" fill="#fdf5a6"/><rect x="1" y="8" width="6.200" height="6" fill="#fbee8e"/><rect x="8.300" y="8" width="6.200" height="6" fill="#fbec84"/><path d="M7.750 1V14M1 7.500H14.500" stroke="#cfc99c" stroke-width="1"/></svg>
<div class="t fn" style="left:37px;top:608.8px">3573621_0001m.mat</div>
<svg class="a" style="left:17px;top:624.2px" width="16" height="15" viewBox="0 0 16 15"><path d="M5.500 1L14 0.300L15 13L0.300 10.500Z" fill="url(#hg)"/><path d="M14 0.300L15.600 1.200L15.900 13.800L15 13Z" fill="#c4c9cc"/><path d="M0.300 10.500L15 13L15.900 13.800L1 11.500Z" fill="#9fc9d0"/></svg>
<div class="t fn" style="left:37px;top:627.1px">3573621_0001m.hea</div>
</div>
<div class="a" style="left:503px;top:192px;width:17px;height:658px;background:#f0f0f0"></div>
<div class="a" style="left:503.5px;top:192px;width:15px;height:558px;background:#cdcdcd"></div>
<svg class="a" style="left:506px;top:837px" width="11" height="7" viewBox="0 0 11 7"><path d="M1 1l4.500 4.500L10 1" fill="none" stroke="#555" stroke-width="1.600"/></svg>
<div class="a" style="left:1px;top:851px;width:520px;height:22px;background:#fdfdfd;border:1px solid #c9c9c9;box-sizing:border-box"></div>
<div class="t" style="left:6px;top:856px;font-size:12.5px;color:#333">Details</div>
<svg class="a" style="left:501px;top:858px" width="11" height="7" viewBox="0 0 11 7"><path d="M1 6l4.500-4.500L10 6" fill="none" stroke="#555" stroke-width="1.600"/></svg>
<div class="a" style="left:526px;top:172px;width:968px;height:625px;background:#fff;border:1px solid #7f96b3;box-sizing:border-box"></div>
<div class="a" style="left:526px;top:172px;width:967px;height:20px;background:#7f9bbb"></div>
<div class="t" style="right:692px;top:176px;font-size:12.1px;color:#fff">Editor - C:\Users\Sare\Documents\MATLAB\after_seyma_hoca_3.m</div>
<svg class="a" style="left:1457px;top:175px" width="32" height="15" viewBox="0 0 32 15"><circle cx="7.500" cy="7.500" r="6" fill="#8ea6c2" stroke="#6f89a8"/><path d="M4.500 6h6l-3 3.500z" fill="#5d7896"/><path d="M20.500 3.500l8 8M28.500 3.500l-8 8" stroke="#111" stroke-width="2"/></svg>
<div class="a" style="left:527px;top:192px;width:966px;height:22px;background:#f2f2f2"></div>
<div class="a" style="left:527px;top:214px;width:966px;height:1px;background:#b9b9b9"></div>
<div class="a" style="left:540px;top:194px;width:168px;height:21px;background:#fafafa;border:1px solid #c4c4c4;border-bottom:none;border-radius:4px 4px 0 0;box-sizing:border-box"></div>
<div class="t" style="left:548px;top:198px;font-size:12.5px">after_seyma_hoca_3.m</div>
<svg class="a" style="left:692px;top:198px" width="11" height="11" viewBox="0 0 11 11"><path d="M1.500 1.500l8 8M9.500 1.500l-8 8" stroke="#c9c9c9" stroke-width="2.200"/></svg>
<div class="a" style="left:708px;top:194px;width:32px;height:21px;background:#f2f2f2;border:1px solid #c4c4c4;border-bottom:none;border-radius:4px 4px 0 0;box-sizing:border-box"></div>
<svg class="a" style="left:717.5px;top:197px" width="13" height="13" viewBox="0 0 13 13"><path d="M6.500 1v11M1 6.500h11" stroke="#222" stroke-width="2"/></svg>
<div class="a" style="left:527px;top:215px;width:85px;height:581px;background:#f5f5f5"></div>
<div class="a" style="left:1264px;top:215px;width:1px;height:581px;background:#d9d9d9"></div>
<div class="a" style="left:527px;top:215px;width:922px;height:581px;overflow:hidden">
<div class="t ln" style="left:-8px;top:-27.2px">78</div>
<div class="t ln" style="left:-8px;top:-7.5px">79</div>
<div class="t code" style="left:107.2px;top:-7.5px">plot(t,ppg,<span class="s">'b'</span>, t(locs),peaks,<span class="s">'or'</span>);</div>
<div class="t ln" style="left:-8px;top:12.1px">80</div>
<div class="t code" style="left:107.2px;top:12.1px">xlim([25 28]); <span class="c">% Zoom işlemi</span></div>
<div class="t ln" style="left:-8px;top:31.8px">81</div>
<div class="t code" style="left:107.2px;top:31.8px">grid <span class="s">on</span>;</div>
<div class="t ln" style="left:-8px;top:51.5px">82</div>
<div class="t code" style="left:107.2px;top:51.5px">xlabel(<span class="s">'Time (s)'</span>);</div>
<div class="t ln" style="left:-8px;top:71.1px">83</div>
<div class="t code" style="left:107.2px;top:71.1px">ylabel(<span class="s">'Amplitude'</span>);</div>
<div class="t ln" style="left:-8px;top:90.8px">84</div>
<div class="t code" style="left:107.2px;top:90.8px">title(<span class="s">'PPG Signal Peaks'</span>);</div>
<div class="t ln" style="left:-8px;top:110.5px">85</div>
<div class="t ln" style="left:-8px;top:130.2px">86</div>
<div class="t code" style="left:107.2px;top:130.2px"><span class="c">% Subplot eksenlerini birbirine bağla</span></div>
<div class="t ln" style="left:-8px;top:149.8px">87</div>
<div class="t code" style="left:107.2px;top:149.8px">set(gcf, <span class="s">'color'</span>, <span class="s">'w'</span>);</div>
<div class="t ln" style="left:-8px;top:169.5px">88</div>
<div class="t code" style="left:107.2px;top:169.5px">set(ax1, <span class="s">'FontSize'</span>, 10);</div>
<div class="t ln" style="left:-8px;top:189.2px">89</div>
<div class="t code" style="left:107.2px;top:189.2px">set(ax2, <span class="s">'FontSize'</span>, 10);</div>
<div class="t ln" style="left:-8px;top:208.8px">90</div>
<div class="t code" style="left:107.2px;top:208.8px">set(ax3, <span class="s">'FontSize'</span>, 10);</div>
<div class="t ln" style="left:-8px;top:228.5px">91</div>
<div class="t code" style="left:107.2px;top:228.5px">set(ax4, <span class="s">'FontSize'</span>, 10);</div>
<div class="t ln" style="left:-8px;top:248.2px">92</div>
<div class="t ln" style="left:-8px;top:267.8px">93</div>
<div class="t code" style="left:107.2px;top:267.8px"><span class="c">%Sistem tamamlandı mesajı</span></div>
<div class="t ln" style="left:-8px;top:287.5px">94</div>
<div class="t code" style="left:107.2px;top:287.5px">disp(<span class="s">'PPG sinyali başarılı bir şekilde işlendi ve sonuçlar görselleştirildi.'</span>);</div>
<div class="t ln" style="left:-8px;top:307.2px">95</div>
<div class="t ln" style="left:-8px;top:326.9px">96</div>
<div class="t code" style="left:107.2px;top:326.9px">load(<span class="s">'3573621_0004_ppg_preprocessed.mat'</span>);</div>
<div class="t ln" style="left:-8px;top:346.5px">97</div>
<div class="t ln" style="left:-8px;top:366.2px">98</div>
<div class="t ln" style="left:-8px;top:385.9px">99</div>
<div class="t code" style="left:107.2px;top:385.9px">start_time = 25;</div>
<div class="t ln" style="left:-8px;top:405.5px">100</div>
<div class="t code" style="left:107.2px;top:405.5px">end_time = 41;</div>
<div class="t ln" style="left:-8px;top:425.2px">101</div>
<div class="t ln" style="left:-8px;top:444.9px">102</div>
<div class="t code" style="left:107.2px;top:444.9px">start_index = find(t &gt;= start_time, 1);</div>
<div class="t ln" style="left:-8px;top:464.5px">103</div>
<div class="t code" style="left:107.2px;top:464.5px">end_index = find(t &lt;= end_time, 1, <span class="s">'last'</span>);</div>
<div class="t ln" style="left:-8px;top:484.2px">104</div>
<div class="t ln" style="left:-8px;top:503.9px">105</div>
<div class="t code" style="left:107.2px;top:503.9px">cut_signal = ppg_corrected(start_index:end_index);</div>
<div class="t ln" style="left:-8px;top:523.6px">106</div>
<div class="t ln" style="left:-8px;top:543.2px">107</div>
<div class="t code" style="left:107.2px;top:543.2px">figure;</div>
<div class="t ln" style="left:-8px;top:562.9px">108</div>
<div class="t code" style="left:107.2px;top:562.9px">plot(cut_signal);</div>
<div class="t ln" style="left:-8px;top:582.6px">109</div>
</div>
<div class="a" style="left:1449px;top:215px;width:18px;height:581px;background:#f1f1f1"></div>
<div class="a" style="left:1451px;top:622px;width:14px;height:148px;background:#c4c4c4"></div>
<svg class="a" style="left:1453px;top:222px" width="9" height="5" viewBox="0 0 9 5"><path d="M0 5h9L4.500 0z" fill="#444"/></svg>
<svg class="a" style="left:1453px;top:785px" width="9" height="5" viewBox="0 0 9 5"><path d="M0 0h9L4.500 5z" fill="#444"/></svg>
<div class="a" style="left:1467px;top:215px;width:26px;height:581px;background:#f3f3f3;border-left:1px solid #ddd;box-sizing:border-box"></div>
<svg class="a" style="left:1472px;top:218px" width="16" height="16" viewBox="0 0 16 16"><circle cx="8" cy="8" r="7.500" fill="#4ea82f"/><path d="M4.200 8.200l2.700 2.800l5-5.500" fill="none" stroke="#fff" stroke-width="2"/></svg>
<div class="a" style="left:526px;top:802px;width:968px;height:72px;background:#fff;border:1px solid #d0d0d0;box-sizing:border-box"></div>
<div class="a" style="left:527px;top:803px;width:966px;height:17px;background:#f7f7f7;border-bottom:1px solid #e0e0e0"></div>
<div class="t" style="left:531px;top:804.5px;font-size:12.6px;color:#333">Command Window</div>
<svg class="a" style="left:1475px;top:804px" width="15" height="15" viewBox="0 0 15 15"><circle cx="7.500" cy="7.500" r="6" fill="#fff" stroke="#666"/><path d="M4.500 6h6l-3 3.800z" fill="#555"/></svg>
<div class="a" style="left:527px;top:821px;width:21px;height:52px;background:#f4f4f4"></div>
<div class="t cw" style="left:551px;top:828px">PPG sinyali başarılı bir şekilde işlendi ve sonuçlar görselleştirildi.</div>
<div class="t cw" style="left:551px;top:849.5px">&gt;&gt;</div>
<div class="t" style="left:530px;top:846px;font-family:'Liberation Serif',serif;font-style:italic;font-weight:bold;font-size:16px;color:#222;line-height:18px">fx</div>
<svg class="a" style="left:540px;top:860px" width="5" height="3" viewBox="0 0 5 3"><path d="M0 0h5l-2.500 3z" fill="#111"/></svg>
<div class="a phead" style="left:1497px;top:172px;width:103px;height:20px"></div>
<div class="t" style="left:1503px;top:176px;font-size:12px;color:#333">Workspace</div>
<svg class="a" style="left:1580px;top:175px" width="15" height="15" viewBox="0 0 15 15"><circle cx="7.500" cy="7.500" r="6" fill="#fff" stroke="#666"/><path d="M4.500 6h6l-3 3.800z" fill="#555"/></svg>
<div class="a pan" style="left:1498px;top:192px;width:101px;height:681px"></div>
<div class="t" style="left:1504px;top:201px;font-size:12.5px">Name</div>
<svg class="a" style="left:1541px;top:205px" width="8" height="5" viewBox="0 0 8 5"><path d="M0 4.500h8l-4-4.500z" fill="#b5b5b5"/></svg>
<div class="a" style="left:1499px;top:220px;width:99px;height:1px;background:#e6e6e6"></div>
<div class="a" style="left:1499px;top:221px;width:99px;height:630px;overflow:hidden">
<svg class="a" style="left:1px;top:0.1px" width="15.5" height="15" viewBox="0 0 15.5 15"><rect x="0.5" y="0.5" width="14.5" height="14" fill="#fbef96" stroke="#a3a394"/><rect x="1" y="1" width="6.200" height="6" fill="#fbfbf2"/><rect x="8.300" y="1" width="6.200" height="6" fill="#fdf5a6"/><rect x="1" y="8" width="6.200" height="6" fill="#fbee8e"/><rect x="8.300" y="8" width="6.200" height="6" fill="#fbec84"/><path d="M7.750 1V14M1 7.500H14.500" stroke="#cfc99c" stroke-width="1"/></svg>
<div class="t fn" style="left:20.5px;top:3.0px">a</div>
<svg class="a" style="left:1px;top:17.6px" width="16" height="16" viewBox="0 0 16 16"><rect x="0.5" y="0.5" width="15" height="15" fill="#f4efb0" stroke="#9a9f8c"/><path d="M8 3L12.500 5V10.500L8 13L3.500 10.500V5Z" fill="#5b93cf" stroke="#2f5f98" stroke-width="0.800"/><path d="M3.500 5L8 7.200L12.500 5L8 3Z" fill="#bcd9f4"/><path d="M8 7.200V13" stroke="#2f5f98" stroke-width="0.800"/></svg>
<div class="t fn" style="left:20.5px;top:20.5px">ax1</div>
<svg class="a" style="left:1px;top:35.1px" width="16" height="16" viewBox="0 0 16 16"><rect x="0.5" y="0.5" width="15" height="15" fill="#f4efb0" stroke="#9a9f8c"/><path d="M8 3L12.500 5V10.500L8 13L3.500 10.500V5Z" fill="#5b93cf" stroke="#2f5f98" stroke-width="0.800"/><path d="M3.500 5L8 7.200L12.500 5L8 3Z" fill="#bcd9f4"/><path d="M8 7.200V13" stroke="#2f5f98" stroke-width="0.800"/></svg>
<div class="t fn" style="left:20.5px;top:38.0px">ax2</div>
<svg class="a" style="left:1px;top:52.6px" width="16" height="16" viewBox="0 0 16 16"><rect x="0.5" y="0.5" width="15" height="15" fill="#f4efb0" stroke="#9a9f8c"/><path d="M8 3L12.500 5V10.500L8 13L3.500 10.500V5Z" fill="#5b93cf" stroke="#2f5f98" stroke-width="0.800"/><path d="M3.500 5L8 7.200L12.500 5L8 3Z" fill="#bcd9f4"/><path d="M8 7.200V13" stroke="#2f5f98" stroke-width="0.800"/></svg>
<div class="t fn" style="left:20.5px;top:55.5px">ax3</div>
<svg class="a" style="left:1px;top:70.1px" width="16" height="16" viewBox="0 0 16 16"><rect x="0.5" y="0.5" width="15" height="15" fill="#f4efb0" stroke="#9a9f8c"/><path d="M8 3L12.500 5V10.500L8 13L3.500 10.500V5Z" fill="#5b93cf" stroke="#2f5f98" stroke-width="0.800"/><path d="M3.500 5L8 7.200L12.500 5L8 3Z" fill="#bcd9f4"/><path d="M8 7.200V13" stroke="#2f5f98" stroke-width="0.800"/></svg>
<div class="t fn" style="left:20.5px;top:73.0px">ax4</div>
<svg class="a" style="left:1px;top:87.6px" width="15.5" height="15" viewBox="0 0 15.5 15"><rect x="0.5" y="0.5" width="14.5" height="14" fill="#fbef96" stroke="#a3a394"/><rect x="1" y="1" width="6.200" height="6" fill="#fbfbf2"/><rect x="8.300" y="1" width="6.200" height="6" fill="#fdf5a6"/><rect x="1" y="8" width="6.200" height="6" fill="#fbee8e"/><rect x="8.300" y="8" width="6.200" height="6" fill="#fbec84"/><path d="M7.750 1V14M1 7.500H14.500" stroke="#cfc99c" stroke-width="1"/></svg>
<div class="t fn" style="left:20.5px;top:90.5px">b</div>
<svg class="a" style="left:1px;top:105.1px" width="15.5" height="15" viewBox="0 0 15.5 15"><rect x="0.5" y="0.5" width="14.5" height="14" fill="#fbef96" stroke="#a3a394"/><rect x="1" y="1" width="6.200" height="6" fill="#fbfbf2"/><rect x="8.300" y="1" width="6.200" height="6" fill="#fdf5a6"/><rect x="1" y="8" width="6.200" height="6" fill="#fbee8e"/><rect x="8.300" y="8" width="6.200" height="6" fill="#fbec84"/><path d="M7.750 1V14M1 7.500H14.500" stroke="#cfc99c" stroke-width="1"/></svg>
<div class="t fn" style="left:20.5px;top:108.0px">cut_signal</div>
<svg class="a" style="left:1px;top:122.6px" width="15.5" height="15" viewBox="0 0 15.5 15"><rect x="0.5" y="0.5" width="14.5" height="14" fill="#fbef96" stroke="#a3a394"/><rect x="1" y="1" width="6.200" height="6" fill="#fbfbf2"/><rect x="8.300" y="1" width="6.200" height="6" fill="#fdf5a6"/><rect x="1" y="8" width="6.200" height="6" fill="#fbee8e"/><rect x="8.300" y="8" width="6.200" height="6" fill="#fbec84"/><path d="M7.750 1V14M1 7.500H14.500" stroke="#cfc99c" stroke-width="1"/></svg>
<div class="t fn" style="left:20.5px;top:125.5px">end_index</div>
<svg class="a" style="left:1px;top:140.1px" width="15.5" height="15" viewBox="0 0 15.5 15"><rect x="0.5" y="0.5" width="14.5" height="14" fill="#fbef96" stroke="#a3a394"/><rect x="1" y="1" width="6.200" height="6" fill="#fbfbf2"/><rect x="8.300" y="1" width="6.200" height="6" fill="#fdf5a6"/><rect x="1" y="8" width="6.200" height="6" fill="#fbee8e"/><rect x="8.300" y="8" width="6.200" height="6" fill="#fbec84"/><path d="M7.750 1V14M1 7.500H14.500" stroke="#cfc99c" stroke-width="1"/></svg>
<div class="t fn" style="left:20.5px;top:143.0px">end_time</div>
<svg class="a" style="left:1px;top:157.6px" width="15.5" height="15" viewBox="0 0 15.5 15"><rect x="0.5" y="0.5" width="14.5" height="14" fill="#fbef96" stroke="#a3a394"/><rect x="1" y="1" width="6.200" height="6" fill="#fbfbf2"/><rect x="8.300" y="1" width="6.200" height="6" fill="#fdf5a6"/><rect x="1" y="8" width="6.200" height="6" fill="#fbee8e"/><rect x="8.300" y="8" width="6.200" height="6" fill="#fbec84"/><path d="M7.750 1V14M1 7.500H14.500" stroke="#cfc99c" stroke-width="1"/></svg>
<div class="t fn" style="left:20.5px;top:160.5px">f</div>
<svg class="a" style="left:1px;top:175.1px" width="15.5" height="15" viewBox="0 0 15.5 15"><rect x="0.5" y="0.5" width="14.5" height="14" fill="#fbef96" stroke="#a3a394"/><rect x="1" y="1" width="6.200" height="6" fill="#fbfbf2"/><rect x="8.300" y="1" width="6.200" height="6" fill="#fdf5a6"/><rect x="1" y="8" width="6.200" height="6" fill="#fbee8e"/><rect x="8.300" y="8" width="6.200" height="6" fill="#fbec84"/><path d="M7.750 1V14M1 7.500H14.500" stroke="#cfc99c" stroke-width="1"/></svg>
<div class="t fn" style="left:20.5px;top:178.0px">filter_order</div>
<svg class="a" style="left:1px;top:192.6px" width="15.5" height="15" viewBox="0 0 15.5 15"><rect x="0.5" y="0.5" width="14.5" height="14" fill="#fbef96" stroke="#a3a394"/><rect x="1" y="1" width="6.200" height="6" fill="#fbfbf2"/><rect x="8.300" y="1" width="6.200" height="6" fill="#fdf5a6"/><rect x="1" y="8" width="6.200" height="6" fill="#fbee8e"/><rect x="8.300" y="8" width="6.200" height="6" fill="#fbec84"/><path d="M7.750 1V14M1 7.500H14.500" stroke="#cfc99c" stroke-width="1"/></svg>
<div class="t fn" style="left:20.5px;top:195.5px">Fs</div>
<svg class="a" style="left:1px;top:210.1px" width="15.5" height="15" viewBox="0 0 15.5 15"><rect x="0.5" y="0.5" width="14.5" height="14" fill="#fbef96" stroke="#a3a394"/><rect x="1" y="1" width="6.200" height="6" fill="#fbfbf2"/><rect x="8.300" y="1" width="6.200" height="6" fill="#fdf5a6"/><rect x="1" y="8" width="6.200" height="6" fill="#fbee8e"/><rect x="8.300" y="8" width="6.200" height="6" fill="#fbec84"/><path d="M7.750 1V14M1 7.500H14.500" stroke="#cfc99c" stroke-width="1"/></svg>
<div class="t fn" style="left:20.5px;top:213.0px">locs</div>
<svg class="a" style="left:1px;top:227.6px" width="15.5" height="15" viewBox="0 0 15.5 15"><rect x="0.5" y="0.5" width="14.5" height="14" fill="#fbef96" stroke="#a3a394"/><rect x="1" y="1" width="6.200" height="6" fill="#fbfbf2"/><rect x="8.300" y="1" width="6.200" height="6" fill="#fdf5a6"/><rect x="1" y="8" width="6.200" height="6" fill="#fbee8e"/><rect x="8.300" y="8" width="6.200" height="6" fill="#fbec84"/><path d="M7.750 1V14M1 7.500H14.500" stroke="#cfc99c" stroke-width="1"/></svg>
<div class="t fn" style="left:20.5px;top:230.5px">p</div>
<svg class="a" style="left:1px;top:245.1px" width="15.5" height="15" viewBox="0 0 15.5 15"><rect x="0.5" y="0.5" width="14.5" height="14" fill="#fbef96" stroke="#a3a394"/><rect x="1" y="1" width="6.200" height="6" fill="#fbfbf2"/><rect x="8.300" y="1" width="6.200" height="6" fill="#fdf5a6"/><rect x="1" y="8" width="6.200" height="6" fill="#fbee8e"/><rect x="8.300" y="8" width="6.200" height="6" fill="#fbec84"/><path d="M7.750 1V14M1 7.500H14.500" stroke="#cfc99c" stroke-width="1"/></svg>
<div class="t fn" style="left:20.5px;top:248.0px">peaks</div>
<svg class="a" style="left:1px;top:262.6px" width="15.5" height="15" viewBox="0 0 15.5 15"><rect x="0.5" y="0.5" width="14.5" height="14" fill="#fbef96" stroke="#a3a394"/><rect x="1" y="1" width="6.200" height="6" fill="#fbfbf2"/><rect x="8.300" y="1" width="6.200" height="6" fill="#fdf5a6"/><rect x="1" y="8" width="6.200" height="6" fill="#fbee8e"/><rect x="8.300" y="8" width="6.200" height="6" fill="#fbec84"/><path d="M7.750 1V14M1 7.500H14.500" stroke="#cfc99c" stroke-width="1"/></svg>
<div class="t fn" style="left:20.5px;top:265.5px">ppg</div>
<svg class="a" style="left:1px;top:280.1px" width="15.5" height="15" viewBox="0 0 15.5 15"><rect x="0.5" y="0.5" width="14.5" height="14" fill="#fbef96" stroke="#a3a394"/><rect x="1" y="1" width="6.200" height="6" fill="#fbfbf2"/><rect x="8.300" y="1" width="6.200" height="6" fill="#fdf5a6"/><rect x="1" y="8" width="6.200" height="6" fill="#fbee8e"/><rect x="8.300" y="8" width="6.200" height="6" fill="#fbec84"/><path d="M7.750 1V14M1 7.500H14.500" stroke="#cfc99c" stroke-width="1"/></svg>
<div class="t fn" style="left:20.5px;top:283.0px">ppg_corrected</div>
<svg class="a" style="left:1px;top:297.6px" width="15.5" height="15" viewBox="0 0 15.5 15"><rect x="0.5" y="0.5" width="14.5" height="14" fill="#fbef96" stroke="#a3a394"/><rect x="1" y="1" width="6.200" height="6" fill="#fbfbf2"/><rect x="8.300" y="1" width="6.200" height="6" fill="#fdf5a6"/><rect x="1" y="8" width="6.200" height="6" fill="#fbee8e"/><rect x="8.300" y="8" width="6.200" height="6" fill="#fbec84"/><path d="M7.750 1V14M1 7.500H14.500" stroke="#cfc99c" stroke-width="1"/></svg>
<div class="t fn" style="left:20.5px;top:300.5px">psd_length</div>
<svg class="a" style="left:1px;top:315.1px" width="15.5" height="15" viewBox="0 0 15.5 15"><rect x="0.5" y="0.5" width="14.5" height="14" fill="#fbef96" stroke="#a3a394"/><rect x="1" y="1" width="6.200" height="6" fill="#fbfbf2"/><rect x="8.300" y="1" width="6.200" height="6" fill="#fdf5a6"/><rect x="1" y="8" width="6.200" height="6" fill="#fbee8e"/><rect x="8.300" y="8" width="6.200" height="6" fill="#fbec84"/><path d="M7.750 1V14M1 7.500H14.500" stroke="#cfc99c" stroke-width="1"/></svg>
<div class="t fn" style="left:20.5px;top:318.0px">signal</div>
<svg class="a" style="left:1px;top:332.6px" width="15.5" height="15" viewBox="0 0 15.5 15"><rect x="0.5" y="0.5" width="14.5" height="14" fill="#fbef96" stroke="#a3a394"/><rect x="1" y="1" width="6.200" height="6" fill="#fbfbf2"/><rect x="8.300" y="1" width="6.200" height="6" fill="#fdf5a6"/><rect x="1" y="8" width="6.200" height="6" fill="#fbee8e"/><rect x="8.300" y="8" width="6.200" height="6" fill="#fbec84"/><path d="M7.750 1V14M1 7.500H14.500" stroke="#cfc99c" stroke-width="1"/></svg>
<div class="t fn" style="left:20.5px;top:335.5px">start_index</div>
<svg class="a" style="left:1px;top:350.1px" width="15.5" height="15" viewBox="0 0 15.5 15"><rect x="0.5" y="0.5" width="14.5" height="14" fill="#fbef96" stroke="#a3a394"/><rect x="1" y="1" width="6.200" height="6" fill="#fbfbf2"/><rect x="8.300" y="1" width="6.200" height="6" fill="#fdf5a6"/><rect x="1" y="8" width="6.200" height="6" fill="#fbee8e"/><rect x="8.300" y="8" width="6.200" height="6" fill="#fbec84"/><path d="M7.750 1V14M1 7.500H14.500" stroke="#cfc99c" stroke-width="1"/></svg>
<div class="t fn" style="left:20.5px;top:353.0px">start_time</div>
<svg class="a" style="left:1px;top:367.6px" width="15.5" height="15" viewBox="0 0 15.5 15"><rect x="0.5" y="0.5" width="14.5" height="14" fill="#fbef96" stroke="#a3a394"/><rect x="1" y="1" width="6.200" height="6" fill="#fbfbf2"/><rect x="8.300" y="1" width="6.200" height="6" fill="#fdf5a6"/><rect x="1" y="8" width="6.200" height="6" fill="#fbee8e"/><rect x="8.300" y="8" width="6.200" height="6" fill="#fbec84"/><path d="M7.750 1V14M1 7.500H14.500" stroke="#cfc99c" stroke-width="1"/></svg>
<div class="t fn" style="left:20.5px;top:370.5px">t</div>
<svg class="a" style="left:1px;top:385.1px" width="15.5" height="15" viewBox="0 0 15.5 15"><rect x="0.5" y="0.5" width="14.5" height="14" fill="#fbef96" stroke="#a3a394"/><rect x="1" y="1" width="6.200" height="6" fill="#fbfbf2"/><rect x="8.300" y="1" width="6.200" height="6" fill="#fdf5a6"/><rect x="1" y="8" width="6.200" height="6" fill="#fbee8e"/><rect x="8.300" y="8" width="6.200" height="6" fill="#fbec84"/><path d="M7.750 1V14M1 7.500H14.500" stroke="#cfc99c" stroke-width="1"/></svg>
<div class="t fn" style="left:20.5px;top:388.0px">window_size</div>
</div>
<div class="a" style="left:1499px;top:856px;width:99px;height:16px;background:#f0f0f0"></div>
<div class="a" style="left:1518px;top:857px;width:27px;height:14px;background:#c8c8c8"></div>
<svg class="a" style="left:1504px;top:859px" width="7" height="10" viewBox="0 0 7 10"><path d="M5.500 1L1.500 5l4 4" fill="none" stroke="#444" stroke-width="1.500"/></svg>
<svg class="a" style="left:1585px;top:859px" width="7" height="10" viewBox="0 0 7 10"><path d="M1.500 1l4 4l-4 4" fill="none" stroke="#444" stroke-width="1.500"/></svg>
<div class="a fw" style="left:96px;top:46.5px;width:583px;height:522.5px;background:#fff;border:1px solid #fff"></div>
<div class="a" style="left:96px;top:46.5px;width:583px;height:30.8px;background:#fff"></div>
<svg class="a" style="left:103px;top:53.2px" width="18" height="17" viewBox="0 0 18 17">
<rect x="0.500" y="0.500" width="17" height="16" fill="#fff" stroke="#b8c4d4"/><rect x="1" y="1" width="16" height="2.500" fill="#6f8fb8"/>
<path d="M3 10.500L6 9C7.500 7.500 8.500 5 9.500 4C10.500 5.500 11.500 8.500 14.500 12.500C13 12.500 11.500 13.500 10.500 15C9.500 13.500 8.500 12 7.800 11L5.500 13Z" fill="#d4582a"/>
<path d="M3 10.500L6 9L7.800 11L5.500 13Z" fill="#4b7bb5"/><path d="M9.500 4C10.500 5.500 11.500 8.500 14.500 12.500C13 12.500 11.500 13.500 10.500 15C10.800 11 10.500 7 9.500 4Z" fill="#f0a030"/></svg>
<div class="t" style="left:124.6px;top:55.1px;font-size:12.3px;letter-spacing:-0.216px;color:#9a9a9a">Figure 1</div>
<svg class="a" style="left:539px;top:46.5px" width="140" height="31" viewBox="0 0 140 31"><path d="M13 15.5h10" stroke="#8a8a8a" stroke-width="1"/><rect x="61.500" y="10.5" width="10" height="10" fill="none" stroke="#8a8a8a" stroke-width="1"/><path d="M110 10.5l10 10M120 10.5l-10 10" stroke="#8a8a8a" stroke-width="1.100"/></svg>
<div class="a" style="left:97px;top:77.3px;width:581px;height:24.7px;background:#fff"></div>
<div class="t mn" style="left:103.2px;top:83.8px;letter-spacing:-0.439px">File</div>
<div class="t mn" style="left:135.8px;top:83.8px;letter-spacing:-0.187px">Edit</div>
<div class="t mn" style="left:171.2px;top:83.8px;letter-spacing:-0.069px">View</div>
<div class="t mn" style="left:212.3px;top:83.8px;letter-spacing:-0.211px">Insert</div>
<div class="t mn" style="left:256.5px;top:83.8px;letter-spacing:-0.037px">Tools</div>
<div class="t mn" style="left:300.7px;top:83.8px;letter-spacing:-0.123px">Desktop</div>
<div class="t mn" style="left:359.4px;top:83.8px;letter-spacing:0.255px">Window</div>
<div class="t mn" style="left:419.1px;top:83.8px;letter-spacing:0.07px">Help</div>
<svg class="a" style="left:666px;top:85.2px" width="8" height="8" viewBox="0 0 8 8"><path d="M0.500 1l5 4.500M6.500 1.500v5h-5" stroke="#111" stroke-width="1.800" fill="none"/></svg>
<div class="a" style="left:97px;top:102.0px;width:581px;height:27.5px;background:#f0f0f0;border-top:1px solid #e2e2e2;box-sizing:border-box"></div>
<div class="a" style="left:97px;top:129.5px;width:581px;height:1px;background:#a9a9a9"></div>
<svg class="a" style="left:96px;top:102.0px" width="240" height="28" viewBox="0 0 240 28"><g transform="translate(3,6)"><path d="M2.500 1.500h8.500l3.500 3.500v10.500h-12z" fill="#fff" stroke="#7f9fc9"/><path d="M11 1.500v3.500h3.500" fill="#dce8f7" stroke="#7f9fc9"/><circle cx="2.500" cy="2.500" r="2.200" fill="#f08a3c"/></g>
<g transform="translate(26,6)"><path d="M0.500 4.500h5l1.500 1.500h8v9.500h-14.500z" fill="#f3d86b" stroke="#c09a2a"/><path d="M0.500 15.500l2.500-7.500h13l-2.500 7.500z" fill="#fbe88f" stroke="#c09a2a"/><path d="M9 3.500c2-2.500 4.500-2 5.500 0" fill="none" stroke="#8ea0b8" stroke-width="1.300"/><path d="M15.500 1.500v3h-3" fill="none" stroke="#8ea0b8" stroke-width="1.200"/></g>
<g transform="translate(50,6)"><path d="M1 1.500h13.500v14h-12l-1.500-1.500z" fill="#4a4fb5" stroke="#2f3390"/><rect x="3.500" y="2" width="8.500" height="6" fill="#dfe3f7"/><rect x="4.500" y="10.500" width="7" height="5" fill="#c9cde6"/><rect x="5.500" y="11.500" width="2.500" height="3.500" fill="#2f3390"/></g>
<g transform="translate(73,6)"><path d="M4.500 1l7-0.500l1.500 6h-9.500z" fill="#f4f7fb" stroke="#9aa7b8"/><path d="M1 7.500l3-2h9l2.500 2v5l-3 2.500h-9l-2.500-2.500z" fill="#c8ccd2" stroke="#8d949e"/><path d="M3.500 11.500h9.500l-1.500 3h-6.500z" fill="#f4f4f4" stroke="#9aa0a8" stroke-width="0.800"/></g>
<path d="M96.500 4v22M126.500 4v22M179.500 4v22" stroke="#c9c9c9"/>
<g transform="translate(102,6)"><rect x="3.500" y="0.500" width="13" height="10" fill="#eaf0fa" stroke="#4a5f8f" stroke-width="1.400"/><rect x="0.700" y="3.500" width="13" height="10" fill="#f7f9fd" stroke="#4a5f8f" stroke-width="1.400"/><rect x="4" y="11" width="6" height="4" rx="2" fill="none" stroke="#6a87b5" stroke-width="1.500"/><rect x="8.500" y="11" width="7" height="4" rx="2" fill="none" stroke="#6a87b5" stroke-width="1.500"/></g>
<g transform="translate(135,6)"><defs><linearGradient id="cbg" x1="0" y1="0" x2="0" y2="1"><stop offset="0" stop-color="#6aa5e8"/><stop offset="0.500" stop-color="#9fd6c8"/><stop offset="1" stop-color="#f3d77a"/></linearGradient></defs><rect x="1" y="0.800" width="10.500" height="15" rx="1" fill="url(#cbg)" stroke="#5a6fa8" stroke-width="1.400"/></g>
<g transform="translate(156,6)"><rect x="0.700" y="0.700" width="15" height="14.600" fill="#f4f6fb" stroke="#4f64a5" stroke-width="1.400"/><rect x="3" y="3.500" width="4.500" height="3.500" fill="#e0575a"/><rect x="3" y="9.500" width="4.500" height="3.500" fill="#5560d0"/><path d="M9.500 5.200h4.500M9.500 11.200h4.500" stroke="#333" stroke-width="1.300"/></g>
<g transform="translate(191,6)"><path d="M1 0.500v13l3-2.800l2.200 5l2-0.900l-2.200-4.800h4.200z" fill="#fff" stroke="#111" stroke-width="1.200" stroke-linejoin="round"/></g>
<g transform="translate(210,6)"><rect x="0.600" y="0.600" width="16" height="15" fill="#fdfdfd" stroke="#7d8793" stroke-width="1.200"/><rect x="0.600" y="0.600" width="16" height="2.800" fill="#7d9ac0"/><path d="M8.500 3.500v12" stroke="#7d8793"/><path d="M10.500 6.500h4.500M10.500 9.500h4.500M10.500 12.500h4.500" stroke="#444" stroke-width="1.300"/></g></svg>
<svg class="a" style="left:96px;top:130.5px;overflow:hidden" width="583" height="438.5" viewBox="96 130.5 583 438.5">
<rect x="143.5" y="167.5" width="232.0" height="174.0" fill="#fff"/>
<path d="M201.5 167.5V341.5" stroke="#dfdfdf" stroke-width="1"/>
<path d="M259.5 167.5V341.5" stroke="#dfdfdf" stroke-width="1"/>
<path d="M317.5 167.5V341.5" stroke="#dfdfdf" stroke-width="1"/>
<path d="M143.5 180.8H375.5" stroke="#dfdfdf" stroke-width="1"/>
<path d="M143.5 234.5H375.5" stroke="#dfdfdf" stroke-width="1"/>
<path d="M143.5 288.2H375.5" stroke="#dfdfdf" stroke-width="1"/>
<path d="M143.5 197.2 144 193.8 144.5 194.9 145 191.8 145.5 183.4 146 186.3 146.5 177.8 147 181.5 147.5 181.4 148 186.6 148.5 191.7 149 188.1 149.5 194.8 150 201.7 150.5 195.4 151 200.8 151.5 193.5 152 200.8 152.5 204.8 153 210.2 153.5 209.7 154 207.8 154.5 210.1 155 205.1 155.5 210.7 156 212.4 156.5 205.3 157 207.4 157.5 206 158 208.3 158.5 208.6 159 199.7 159.5 211.5 160 211.7 160.5 209 161 210.7 161.5 208.8 162 205.5 162.5 210.1 163 207.1 163.5 205.7 164 207.6 164.5 212.8 165 208.1 165.5 206 166 211.6 166.5 206.9 167 207.7 167.5 208 168 208 168.5 210.9 169 212.6 169.5 208.3 170 209.5 170.5 214.1 171 207.8 171.5 212.9 172 210.5 172.5 208.4 173 208.6 173.5 203.8 174 214.9 174.5 210.2 175 211.4 175.5 213.5 176 211.6 176.5 211.4 177 212.5 177.5 211 178 212 178.5 209.7 179 210.8 179.5 211.6 180 214.5 180.5 209.7 181 212.8 181.5 211.6 182 216 182.5 215.8 183 204.5 183.5 215.4 184 214.7 184.5 201.9 185 215.8 185.5 203.8 186 214 186.5 214.8 187 213.1 187.5 208.9 188 199.4 188.5 193.8 189 193.3 189.5 180.6 190 181.3 190.5 192.6 191 205.5 191.5 210.3 192 211.8 192.5 214.1 193 209.2 193.5 206.8 194 212.3 194.5 211.9 195 213.8 195.5 210.8 196 212.8 196.5 210.4 197 210.2 197.5 210.5 198 207.8 198.5 204 199 211.8 199.5 207 200 204.9 200.5 209.3 201 202.2 201.5 202.7 202 198.2 202.5 201.5 203 202.2 203.5 192.5 204 193 204.5 194.3 205 184.2 205.5 190.8 206 190.4 206.5 179.4 207 187.4 207.5 183.2 208 185.6 208.5 178.8 209 178.9 209.5 179 210 190.7 210.5 192.3 211 191.3 211.5 188.8 212 190.4 212.5 197.9 213 203.8 213.5 202.3 214 204.5 214.5 204.5 215 201.2 215.5 201.5 216 204.5 216.5 206.5 217 208.2 217.5 211.3 218 208.3 218.5 210.3 219 205.4 219.5 207.4 220 212.8 220.5 206.6 221 211.9 221.5 207.8 222 209.2 222.5 206.6 223 211.5 223.5 212.9 224 206 224.5 206.8 225 212.1 225.5 211.7 226 211 226.5 212.5 227 209.4 227.5 210.8 228 208.7 228.5 212.4 229 213 229.5 213.7 230 206.9 230.5 209 231 212.8 231.5 214.9 232 207.3 232.5 209 233 213 233.5 215.1 234 214.3 234.5 207.3 235 214 235.5 214 236 211.3 236.5 210.1 237 213 237.5 214.4 238 214.9 238.5 211.3 239 209.1 239.5 206 240 210 240.5 215.6 241 213.3 241.5 211.8 242 215.2 242.5 213.5 243 214.1 243.5 213.4 244 213.7 244.5 214.2 245 208.2 245.5 212.7 246 210.8 246.5 207 247 207.3 247.5 209.6 248 208.7 248.5 207.8 249 203.6 249.5 197.9 250 202.5 250.5 202.4 251 195.8 251.5 183.8 252 194.3 252.5 200.8 253 192.2 253.5 196.4 254 191.8 254.5 191.5 255 179.2 255.5 193.2 256 195.2 256.5 195.5 257 199.6 257.5 189.6 258 205.9 258.5 201.7 259 202.1 259.5 204 260 206.3 260.5 207 261 204.9 261.5 197.7 262 203.9 262.5 199.5 263 200.8 263.5 202.2 264 192 264.5 203.5 265 202.6 265.5 200.1 266 200 266.5 198.6 267 191.7 267.5 190.9 268 188.9 268.5 182.8 269 188.9 269.5 190.5 270 181 270.5 184.1 271 190.7 271.5 187.4 272 184.2 272.5 186.1 273 191.3 273.5 183.3 274 187.4 274.5 183.7 275 196.5 275.5 189 276 197.9 276.5 193.5 277 198.8 277.5 195.8 278 199.9 278.5 198.5 279 200.3 279.5 202.8 280 206.4 280.5 201.9 281 203.5 281.5 202.4 282 204 282.5 204.1 283 202.4 283.5 189.7 284 201.6 284.5 187.8 285 180.4 285.5 187.4 286 187.3 286.5 199.2 287 196.4 287.5 205.2 288 200.7 288.5 205.5 289 209.1 289.5 210.9 290 211.1 290.5 214 291 209 291.5 210.3 292 210.2 292.5 214.2 293 211.4 293.5 210.4 294 200.7 294.5 213.7 295 209.4 295.5 210.1 296 212.7 296.5 209.6 297 210.4 297.5 212.4 298 207.7 298.5 210.9 299 211.4 299.5 205.1 300 205.7 300.5 206.3 301 210.5 301.5 206.1 302 204.6 302.5 205.5 303 206.8 303.5 202.2 304 204 304.5 200.6 305 203.7 305.5 201.2 306 200.1 306.5 207 307 198.7 307.5 202.6 308 200.2 308.5 206.1 309 207.1 309.5 204.9 310 202.6 310.5 202.5 311 202.2 311.5 202.7 312 204.7 312.5 204.1 313 207 313.5 206.4 314 207.1 314.5 206.6 315 205 315.5 188.5 316 200.8 316.5 207.3 317 204.4 317.5 198.6 318 197.6 318.5 196.7 319 195.1 319.5 195.1 320 199.3 320.5 200.7 321 194.7 321.5 194.1 322 194.3 322.5 190.1 323 185.5 323.5 179.9 324 191.5 324.5 188.3 325 189.1 325.5 183.1 326 187.1 326.5 189.2 327 174.4 327.5 186 328 180.9 328.5 181.2 329 184.5 329.5 185.3 330 192.4 330.5 186.6 331 188.6 331.5 192.5 332 192.7 332.5 191 333 191.7 333.5 194.9 334 188.9 334.5 190.7 335 202.2 335.5 201.3 336 185.9 336.5 200.4 337 189.2 337.5 205.9 338 192.9 338.5 204.2 339 207.9 339.5 210.5 340 201.8 340.5 213.2 341 215.9 341.5 218.2 341.5 241.6 341 243.2 340.5 243.5 340 244.5 339.5 247.4 339 248.3 338.5 250 338 249.6 337.5 249.3 337 248.4 336.5 253.8 336 253.4 335.5 250.4 335 254.9 334.5 251.9 334 252.1 333.5 253.3 333 259.7 332.5 266.7 332 258.6 331.5 258.3 331 257.6 330.5 259 330 256.8 329.5 260.6 329 262.1 328.5 262.6 328 262.7 327.5 262.6 327 264.3 326.5 260.3 326 265.6 325.5 260.6 325 261.5 324.5 262.8 324 263 323.5 262.7 323 257.8 322.5 255 322 265.9 321.5 257.5 321 267.2 320.5 255.5 320 253.3 319.5 253.9 319 251.9 318.5 253.9 318 250.5 317.5 251 317 249.2 316.5 248.3 316 248.5 315.5 251.4 315 249.9 314.5 247.8 314 257.7 313.5 249.7 313 248.1 312.5 249 312 246.3 311.5 248.4 311 246.6 310.5 248.5 310 246.1 309.5 244.7 309 253.4 308.5 246.9 308 246.2 307.5 246.8 307 246 306.5 246 306 245.3 305.5 247.1 305 245.4 304.5 246.3 304 251.5 303.5 246.7 303 246.2 302.5 245.7 302 245.1 301.5 245.8 301 245.1 300.5 244.1 300 246.2 299.5 244.1 299 247.1 298.5 245.6 298 244.4 297.5 244.6 297 244.4 296.5 244.6 296 244.6 295.5 246.7 295 245 294.5 247.4 294 252.1 293.5 246.7 293 244.8 292.5 247.1 292 245.6 291.5 245.4 291 244.8 290.5 244.9 290 256.2 289.5 248 289 255 288.5 246.7 288 247 287.5 245.8 287 248.8 286.5 245.8 286 249.6 285.5 260.1 285 249.1 284.5 246.2 284 246.7 283.5 249.2 283 249.8 282.5 250.6 282 250.3 281.5 249 281 252.3 280.5 248.2 280 251.8 279.5 251.3 279 254 278.5 251.3 278 254.9 277.5 251.2 277 252 276.5 257.6 276 254.3 275.5 259 275 257.9 274.5 260 274 257.7 273.5 267.3 273 256.5 272.5 257 272 260.7 271.5 256.9 271 260.4 270.5 259 270 257.7 269.5 259.6 269 266 268.5 257.8 268 255.8 267.5 258.2 267 254 266.5 255.7 266 255.7 265.5 256.8 265 251.7 264.5 253 264 252.4 263.5 252 263 250.8 262.5 247.4 262 246.8 261.5 249.3 261 246.9 260.5 248.6 260 250.1 259.5 247 259 249.2 258.5 250.6 258 252.1 257.5 253 257 250.9 256.5 250.3 256 251 255.5 253.7 255 253.3 254.5 251.9 254 251.6 253.5 251.9 253 251.5 252.5 251 252 253.1 251.5 251.6 251 255.8 250.5 252.9 250 250.9 249.5 252.3 249 248.8 248.5 249.6 248 247.8 247.5 248.5 247 248 246.5 250.9 246 250.2 245.5 250.4 245 246.3 244.5 247.9 244 249.2 243.5 247.5 243 246.4 242.5 248.8 242 249.2 241.5 248.9 241 246.8 240.5 246.2 240 249.5 239.5 246.2 239 249.2 238.5 248.5 238 249.4 237.5 247.8 237 250.1 236.5 253.6 236 257.2 235.5 250.1 235 249.2 234.5 260.6 234 254.1 233.5 248 233 249.4 232.5 246.5 232 246.6 231.5 248.6 231 246.6 230.5 248.8 230 245.9 229.5 247.3 229 247.3 228.5 249.4 228 246.4 227.5 246.2 227 246.1 226.5 245.4 226 246.2 225.5 245.2 225 245.9 224.5 247.3 224 247.1 223.5 246.7 223 247 222.5 246.9 222 244.6 221.5 246.8 221 246.2 220.5 247.8 220 245.6 219.5 247.4 219 250.2 218.5 245.1 218 246.4 217.5 245.2 217 246.2 216.5 247.7 216 245.9 215.5 246.6 215 247.2 214.5 246.3 214 248.8 213.5 247.9 213 251.5 212.5 251.5 212 261 211.5 253.7 211 251.2 210.5 256.4 210 251.8 209.5 256 209 254.6 208.5 254 208 265.3 207.5 256.7 207 262.5 206.5 256.9 206 256.6 205.5 258.9 205 258.4 204.5 264.7 204 253.7 203.5 254.2 203 250 202.5 253 202 255.7 201.5 249.8 201 248.5 200.5 255.7 200 249 199.5 259.7 199 249.9 198.5 247.2 198 248.5 197.5 248.1 197 249 196.5 246.1 196 250.1 195.5 249 195 248.4 194.5 247.7 194 252 193.5 247.6 193 248.5 192.5 248.3 192 248 191.5 252.2 191 254.2 190.5 259 190 257.1 189.5 258.5 189 260.6 188.5 253.6 188 261.4 187.5 251.6 187 246.9 186.5 248.3 186 248.1 185.5 249.2 185 249.4 184.5 245.9 184 246.1 183.5 247.1 183 246.4 182.5 249.1 182 246.4 181.5 245.1 181 246.3 180.5 248 180 248.4 179.5 245.3 179 248 178.5 255.2 178 247.9 177.5 247.6 177 246.2 176.5 246.1 176 246.9 175.5 245.1 175 246.8 174.5 245.9 174 246.7 173.5 245.7 173 245.3 172.5 245 172 244.7 171.5 244.6 171 245.2 170.5 247 170 244.9 169.5 244.2 169 244.1 168.5 245.1 168 244.9 167.5 246.3 167 244.1 166.5 246.7 166 244.5 165.5 247.2 165 247.2 164.5 244.1 164 244.8 163.5 247.1 163 245.3 162.5 244.8 162 247.4 161.5 252.6 161 259.1 160.5 244.9 160 247.8 159.5 245.7 159 246.2 158.5 246.2 158 247.4 157.5 248.1 157 245.4 156.5 247.9 156 247 155.5 247.3 155 246.1 154.5 247.2 154 249.3 153.5 254.4 153 246.3 152.5 246.4 152 250.5 151.5 250.7 151 250.9 150.5 251.7 150 256.1 149.5 259.8 149 259.7 148.5 266.3 148 267.8 147.5 273.5 147 279 146.5 277 146 278.3 145.5 293.6 145 279.5 144.5 275.6 144 279 143.5 277.6Z" fill="#0072bd" stroke="#0072bd" stroke-width="0.6" stroke-linejoin="round"/>
<path d="M162.5 234.5V202.3M167.5 234.5V199.6M174 234.5V182.1M189.3 234.5V167.5M194 234.5V176.8M202.1 234.5V175.4M217.4 234.5V178.1M223.5 234.5V194.2M229.9 234.5V180.8M236.1 234.5V180.8M243 234.5V184.8M249.2 234.5V188.9M258 234.5V191.5M272.1 234.5V180.8M280.5 234.5V183.5M293.5 234.5V196.9M308 234.5V190.2M314.2 234.5V175.4M319.5 234.5V183.5M333.5 234.5V182.1M148 234.5V171.4M151.5 234.5V175.4M155.5 234.5V183.5M144.1 234.5V290.9M147.5 234.5V280.1M160.5 234.5V265.4M173 234.5V282.8M179.5 234.5V266.7M189.2 234.5V308.3M195.5 234.5V269.4M204.5 234.5V272.1M215.5 234.5V293.6M221.5 234.5V272.1M229.2 234.5V294.9M239.5 234.5V269.4M250.5 234.5V289.5M258 234.5V305.7M264.5 234.5V274.8M271.5 234.5V277.5M278.5 234.5V266.7M285.5 234.5V270.7M290.5 234.5V274.8M299.5 234.5V266.7M313 234.5V282.8M317.5 234.5V269.4M321.5 234.5V300.3M328 234.5V270.7M334.5 234.5V274.8" stroke="#0072bd" stroke-width="0.9" opacity="0.85" fill="none"/>
<rect x="143.5" y="167.5" width="232.0" height="174.0" fill="none" stroke="#555" stroke-width="1"/>
<text class="tk" x="143.5" y="358" text-anchor="middle">0</text>
<text class="tk" x="201.5" y="358" text-anchor="middle">0.5</text>
<text class="tk" x="259.5" y="358" text-anchor="middle">1</text>
<text class="tk" x="317.5" y="358" text-anchor="middle">1.5</text>
<text class="tk" x="375.5" y="358" text-anchor="middle">2</text>
<text class="tk" x="138.5" y="185.1" text-anchor="end">2</text>
<text class="tk" x="138.5" y="238.8" text-anchor="end">0</text>
<text class="tk" x="138.5" y="292.5" text-anchor="end">-2</text>
<text class="tk" x="138.5" y="345.8" text-anchor="end">-4</text>
<path d="M143.5 341.5v-2.3M143.5 167.5v2.3M201.5 341.5v-2.3M201.5 167.5v2.3M259.5 341.5v-2.3M259.5 167.5v2.3M317.5 341.5v-2.3M317.5 167.5v2.3M375.5 341.5v-2.3M375.5 167.5v2.3M143.5 180.8h2.3M375.5 180.8h-2.3M143.5 234.5h2.3M375.5 234.5h-2.3M143.5 288.2h2.3M375.5 288.2h-2.3M143.5 341.5h2.3M375.5 341.5h-2.3" stroke="#555" stroke-width="1" fill="none"/>
<text class="tt" x="259" y="161.500" text-anchor="middle" letter-spacing="0.2">Preprocessed PPG Signal</text>
<text class="lb" x="259.500" y="376.500" text-anchor="middle">Time (s)</text>
<text class="lb" transform="translate(121,254.500) rotate(-90)" text-anchor="middle">Amplitude</text>
<text class="tk" x="347.5" y="380">×<tspan dx="1">10</tspan><tspan dy="-6" font-size="9">4</tspan></text>
<rect x="423.5" y="167.5" width="232.0" height="174.0" fill="#fff"/>
<path d="M497.8 167.5V341.5" stroke="#dfdfdf" stroke-width="1"/>
<path d="M572.1 167.5V341.5" stroke="#dfdfdf" stroke-width="1"/>
<path d="M646.4 167.5V341.5" stroke="#dfdfdf" stroke-width="1"/>
<path d="M423.5 173.8H655.5" stroke="#dfdfdf" stroke-width="1"/>
<path d="M423.5 228.9H655.5" stroke="#dfdfdf" stroke-width="1"/>
<path d="M423.5 284.1H655.5" stroke="#dfdfdf" stroke-width="1"/>
<path d="M423.5 339.2H655.5" stroke="#dfdfdf" stroke-width="1"/>
<path d="M423.5 180.9 424 181.3 424.5 181.2 425 176.6 425.5 174 426 174.4 426.5 177.1 427 178.3 427.5 178.2 428 180.4 428.5 180.1 429 181.1 429.5 177.4 430 178.2 430.5 173.5 431 172.2 431.5 170.6 432 169 432.5 169.3 433 177.1 433.5 178.7 434 181.5 434.5 185 435 189.3 435.5 190 436 186.3 436.5 186.5 437 189.8 437.5 186.4 438 188.9 438.5 186.4 439 183.9 439.5 185.6 440 180 440.5 178.2 441 179.7 441.5 180.4 442 182.6 442.5 184.8 443 187 443.5 189.5 444 191.2 444.5 193.5 445 190.3 445.5 194 446 193.6 446.5 193 447 190.3 447.5 190.9 448 190.8 448.5 189.3 449 187.2 449.5 191.1 450 190.8 450.5 194.5 451 194.7 451.5 200.7 452 202 452.5 201.2 453 202.3 453.5 199.8 454 201 454.5 201.7 455 201.5 455.5 197.9 456 200.9 456.5 199.5 457 197.7 457.5 199.6 458 198.1 458.5 195.3 459 198.1 459.5 195.9 460 199 460.5 200.6 461 203.4 461.5 200.1 462 202 462.5 205.8 463 203.6 463.5 207.2 464 206.1 464.5 206.4 465 207.9 465.5 206.9 466 204.9 466.5 204.1 467 204.9 467.5 204.3 468 202.3 468.5 204.8 469 205.1 469.5 205.2 470 204.7 470.5 205.3 471 203.7 471.5 203.8 472 204.4 472.5 204.7 473 207.3 473.5 206.6 474 209 474.5 210 475 208.8 475.5 212.5 476 213.2 476.5 209.6 477 213.8 477.5 209.5 478 211.6 478.5 212.6 479 211.1 479.5 212.2 480 213.4 480.5 214.9 481 215.8 481.5 217.6 482 214 482.5 218.3 483 219.6 483.5 216.3 484 220.5 484.5 219.9 485 222.3 485.5 221.5 486 224.6 486.5 222.9 487 225.1 487.5 226.2 488 226.6 488.5 224.7 489 226.8 489.5 229.1 490 228.4 490.5 231 491 231.5 491.5 232.6 492 229.7 492.5 232.7 493 235.5 493.5 236 494 236 494.5 237.1 495 235.1 495.5 238 496 239.4 496.5 236.8 497 239 497.5 240.1 498 241.5 498.5 242.2 499 241.5 499.5 243 500 245.6 500.5 242.4 501 247 501.5 246.6 502 247.8 502.5 248.9 503 247 503.5 249.7 504 251 504.5 251.4 505 253.2 505.5 253.6 506 253.1 506.5 250.4 507 251.8 507.5 251.3 508 252.9 508.5 256.9 509 253.1 509.5 254.8 510 254.1 510.5 259.2 511 258.5 511.5 259.4 512 256.5 512.5 261 513 259.6 513.5 260.6 514 262 514.5 263 515 263 515.5 264.8 516 265.3 516.5 265.6 517 264 517.5 264.1 518 266.5 518.5 266.7 519 264.1 519.5 265.5 520 267.9 520.5 269 521 266.6 521.5 268.8 522 271.3 522.5 271.8 523 269.1 523.5 269.3 524 271.2 524.5 270.9 525 273.3 525.5 274.3 526 270.9 526.5 271.3 527 273.1 527.5 272.1 528 275.5 528.5 275.3 529 275 529.5 276.3 530 278.1 530.5 276.4 531 278.2 531.5 279.3 532 277.3 532.5 275.5 533 280 533.5 280.5 534 281.4 534.5 279.8 535 279.4 535.5 278.9 536 278.9 536.5 278.6 537 280.8 537.5 282.5 538 281.2 538.5 283.4 539 282.7 539.5 281.4 540 284.3 540.5 285.1 541 283.6 541.5 281.5 542 281.6 542.5 284 543 286.5 543.5 281.9 544 285.7 544.5 284.7 545 283.7 545.5 284.6 546 283.7 546.5 284.5 547 286.8 547.5 286.9 548 286.9 548.5 288.1 549 286.7 549.5 288.7 550 286.4 550.5 286.3 551 287.6 551.5 286 552 285.3 552.5 286 553 286.2 553.5 285.8 554 286.2 554.5 286.1 555 286.2 555.5 286.2 556 286.5 556.5 286.4 557 286.9 557.5 287.1 558 286.5 558.5 286.5 559 287.1 559.5 286.8 560 286.8 560.5 287.4 561 287.4 561.5 287.2 562 287 562.5 287.2 563 286.8 563.5 286.7 564 287.1 564.5 287.4 565 287.6 565.5 287.1 566 287.1 566.5 287.3 567 287.3 567.5 287.3 568 287.2 568.5 287.3 569 287.3 569.5 287.3 570 287.6 570.5 287.6 571 287.9 571.5 287.7 572 287.4 572.5 287.3 573 287.5 573.5 288.2 574 288.2 574.5 287.7 575 287.4 575.5 288.1 576 287.6 576.5 288.2 577 287.6 577.5 287.5 578 287.8 578.5 287.7 579 288.1 579.5 288.3 580 288.4 580.5 288.1 581 288.4 581.5 288.1 582 287.7 582.5 288.3 583 288.3 583.5 288.4 584 287.9 584.5 288.4 585 288.5 585.5 288.5 586 287.9 586.5 288 587 288.5 587.5 288.3 588 288.6 588.5 288.3 589 288.3 589.5 288.6 590 288.5 590.5 288.1 591 288.1 591.5 288.6 592 288.8 592.5 288.9 593 288.8 593.5 288.9 594 288.4 594.5 288.7 595 288.4 595.5 288.2 596 288.9 596.5 288.5 597 288.7 597.5 288.8 598 289.1 598.5 288.9 599 289.1 599.5 289.1 600 289.1 600.5 289.1 601 288.8 601.5 289 602 288.5 602.5 289.1 603 288.6 603.5 289.1 604 289.2 604.5 289.4 605 289.1 605.5 289.1 606 288.9 606.5 289 607 288.9 607.5 288.8 608 289.2 608.5 289.2 609 289.3 609.5 289.2 610 288.8 610.5 289.1 611 289.4 611.5 289.4 612 289.5 612.5 289 613 288.9 613.5 289.2 614 289.2 614.5 289.5 615 289.8 615.5 289.1 616 289.3 616.5 289.7 617 289.3 617.5 289.3 618 289.5 618.5 289.4 619 289.4 619.5 289.8 620 289.8 620.5 289.6 621 289.6 621.5 289.9 622 289.3 622.5 289.7 623 289.4 623.5 290 624 289.8 624.5 289.5 625 289.5 625.5 289.9 626 289.5 626.5 290.1 627 290.2 627.5 289.6 628 289.9 628.5 290 629 289.8 629.5 290 630 289.8 630.5 289.8 631 290 631.5 290.2 632 290.2 632.5 290.3 633 290.5 633.5 289.9 634 290.3 634.5 289.9 635 290.1 635.5 290.5 636 290 636.5 290.4 637 290.3 637.5 290.1 638 290.4 638.5 290 639 290.4 639.5 290 640 290 640.5 290.5 641 290.6 641.5 290.2 642 290.4 642.5 290.1 643 290.9 643.5 290.5 644 290.2 644.5 290.6 645 290.6 645.5 290.6 646 290.5 646.5 290.7 647 290.5 647.5 290.4 648 291 648.5 291.1 649 291.1 649.5 290.5 650 291.2 650.5 290.6 651 291.2 651.5 290.9 652 290.4 652.5 290.5 653 291 653.5 291.3 654 291.1 654.5 291.1 655 290.7 655.5 291 655.5 297.4 655 297.2 654.5 297.5 654 297.5 653.5 296.8 653 297.2 652.5 297.5 652 296.9 651.5 297.1 651 297 650.5 297.2 650 297 649.5 297.1 649 297.5 648.5 296.8 648 297.3 647.5 296.8 647 297 646.5 297.4 646 296.8 645.5 296.7 645 297 644.5 296.6 644 297.1 643.5 297 643 296.9 642.5 296.7 642 296.9 641.5 297 641 297.3 640.5 296.7 640 296.7 639.5 297.1 639 296.8 638.5 297 638 296.7 637.5 297 637 296.9 636.5 297.2 636 296.7 635.5 296.8 635 296.4 634.5 297.1 634 296.9 633.5 296.9 633 297 632.5 296.6 632 297.1 631.5 296.8 631 296.9 630.5 296.7 630 296.9 629.5 296.3 629 296.6 628.5 296.1 628 296.9 627.5 296.5 627 296.7 626.5 296.7 626 296.8 625.5 296.2 625 296.9 624.5 296.1 624 296.3 623.5 296.2 623 296.7 622.5 296.4 622 296.4 621.5 296.7 621 296.4 620.5 296.2 620 296 619.5 296.2 619 296.3 618.5 296.5 618 296.2 617.5 296.4 617 296.4 616.5 296.1 616 295.8 615.5 296.2 615 296 614.5 295.8 614 296.1 613.5 296.3 613 296.6 612.5 295.9 612 296.5 611.5 296.3 611 296 610.5 295.7 610 296.5 609.5 296.4 609 296.2 608.5 295.6 608 296.2 607.5 295.8 607 295.6 606.5 295.9 606 295.8 605.5 296.4 605 295.9 604.5 295.9 604 296.3 603.5 296.2 603 295.7 602.5 295.5 602 296 601.5 295.9 601 296.2 600.5 295.6 600 295.7 599.5 295.9 599 295.8 598.5 295.4 598 295.3 597.5 296.1 597 296 596.5 296.1 596 295.5 595.5 296.1 595 295.3 594.5 295.3 594 296 593.5 295.9 593 295.4 592.5 295.3 592 295.2 591.5 296 591 295.1 590.5 295.8 590 295.3 589.5 295.2 589 295.2 588.5 295.6 588 295.3 587.5 295.1 587 295.6 586.5 295.2 586 295.7 585.5 295.1 585 295.4 584.5 295 584 295.3 583.5 295.6 583 295.4 582.5 295.6 582 295.2 581.5 295 581 295.3 580.5 295 580 295.2 579.5 295.1 579 294.9 578.5 295.3 578 295.4 577.5 295.2 577 295.4 576.5 295.6 576 294.8 575.5 295.5 575 295.3 574.5 295.4 574 295.1 573.5 295.4 573 295.5 572.5 295.3 572 295.2 571.5 295 571 295.6 570.5 294.8 570 295.4 569.5 294.8 569 295.4 568.5 295 568 295.5 567.5 295.5 567 295.2 566.5 295.3 566 295.5 565.5 295.8 565 295.8 564.5 295.8 564 295.3 563.5 295.9 563 295.5 562.5 296 562 295.8 561.5 295.7 561 295.6 560.5 295.8 560 295.9 559.5 295.9 559 295.7 558.5 296.2 558 295.9 557.5 296 557 296.4 556.5 295.8 556 296.5 555.5 295.9 555 296.8 554.5 296.5 554 297.3 553.5 297.5 553 297.8 552.5 298.2 552 298.2 551.5 298.3 551 294.2 550.5 313.4 550 293 549.5 299.6 549 297.3 548.5 303.8 548 302.4 547.5 302.5 547 301.2 546.5 300.2 546 299.4 545.5 306.9 545 303.7 544.5 316.9 544 309.2 543.5 327.3 543 320.9 542.5 309.4 542 316.2 541.5 318.4 541 326.8 540.5 315.2 540 313.3 539.5 322.6 539 319.3 538.5 316.5 538 327.9 537.5 322.5 537 334.4 536.5 332.1 536 325.8 535.5 323.7 535 318 534.5 318.2 534 329.9 533.5 328 533 319.3 532.5 337.8 532 323.2 531.5 337.3 531 336.6 530.5 327.7 530 320.8 529.5 341.5 529 323.5 528.5 325.9 528 324 527.5 320.2 527 318.1 526.5 317.5 526 314.6 525.5 322.6 525 319 524.5 315.1 524 319 523.5 318.8 523 322.9 522.5 322.5 522 326.2 521.5 325.9 521 314.7 520.5 320.4 520 314.6 519.5 331.3 519 316.7 518.5 315.7 518 330 517.5 306.6 517 314.9 516.5 309.3 516 306.2 515.5 312.6 515 307.9 514.5 305.5 514 314 513.5 304.6 513 317.8 512.5 306.4 512 308.3 511.5 309.3 511 310 510.5 307.1 510 303.6 509.5 301.1 509 307.1 508.5 300.7 508 298.7 507.5 302 507 297.2 506.5 310.7 506 302.5 505.5 294.1 505 293.3 504.5 296.3 504 291.3 503.5 303.4 503 303.8 502.5 295.5 502 287.7 501.5 291.8 501 306.3 500.5 287.7 500 288.1 499.5 300.6 499 293.7 498.5 309.4 498 287.8 497.5 288.8 497 291.8 496.5 287.1 496 301.2 495.5 298.5 495 288.5 494.5 291.1 494 286.6 493.5 297.6 493 278 492.5 281.5 492 281.4 491.5 282.5 491 275.7 490.5 280.7 490 275.2 489.5 276 489 299.4 488.5 278.7 488 279 487.5 281.6 487 274.6 486.5 277.3 486 290.1 485.5 281.3 485 271.5 484.5 281.4 484 277.7 483.5 278.7 483 268 482.5 268.2 482 263.6 481.5 262.6 481 260.8 480.5 264.3 480 264.3 479.5 262 479 271 478.5 260 478 259.8 477.5 256.3 477 262.6 476.5 263.8 476 254.4 475.5 272.7 475 255.5 474.5 258.6 474 259.8 473.5 255.9 473 255.2 472.5 265 472 258.2 471.5 257.5 471 255.7 470.5 260 470 260.4 469.5 258 469 260.5 468.5 250.6 468 257.3 467.5 266.3 467 255.1 466.5 252.9 466 251 465.5 265.2 465 262.3 464.5 251.8 464 252.8 463.5 244.2 463 247.1 462.5 246.1 462 256.8 461.5 244.4 461 257.2 460.5 245.1 460 241.5 459.5 242.6 459 246 458.5 242.2 458 241.7 457.5 242 457 253.9 456.5 249.5 456 249.7 455.5 250.1 455 245.4 454.5 250.6 454 257.6 453.5 261.9 453 242.9 452.5 243.5 452 242.4 451.5 243.3 451 253 450.5 237.6 450 251.5 449.5 252.2 449 242.6 448.5 240 448 240.2 447.5 233.6 447 244.5 446.5 233.5 446 234 445.5 235.1 445 241.6 444.5 239.2 444 238.3 443.5 249.7 443 237.8 442.5 239.4 442 233 441.5 252.7 441 232.4 440.5 231.7 440 241 439.5 229.8 439 238.3 438.5 236.3 438 234.2 437.5 233.9 437 235.5 436.5 230.6 436 229.3 435.5 238.5 435 252.3 434.5 233.9 434 254.1 433.5 230.4 433 237.8 432.5 241.4 432 226 431.5 228.3 431 249.7 430.5 236 430 220.7 429.5 225.8 429 227.1 428.5 223.4 428 221.5 427.5 225.5 427 223 426.5 218.7 426 230.3 425.5 219.6 425 237.5 424.5 243.5 424 263 423.5 289.9Z" fill="#0072bd" stroke="#0072bd" stroke-width="0.6" stroke-linejoin="round"/>
<rect x="423.5" y="167.5" width="232.0" height="174.0" fill="none" stroke="#555" stroke-width="1"/>
<text class="tk" x="423.5" y="358" text-anchor="middle">0</text>
<text class="tk" x="497.8" y="358" text-anchor="middle">10</text>
<text class="tk" x="572.1" y="358" text-anchor="middle">20</text>
<text class="tk" x="646.4" y="358" text-anchor="middle">30</text>
<text class="tk" x="418.5" y="178.1" text-anchor="end">0</text>
<text class="tk" x="418.5" y="233.2" text-anchor="end">-50</text>
<text class="tk" x="418.5" y="288.4" text-anchor="end">-100</text>
<text class="tk" x="418.5" y="343.5" text-anchor="end">-150</text>
<path d="M423.5 341.5v-2.3M423.5 167.5v2.3M497.8 341.5v-2.3M497.8 167.5v2.3M572.1 341.5v-2.3M572.1 167.5v2.3M646.4 341.5v-2.3M646.4 167.5v2.3M423.5 173.8h2.3M655.5 173.8h-2.3M423.5 228.9h2.3M655.5 228.9h-2.3M423.5 284.1h2.3M655.5 284.1h-2.3M423.5 339.2h2.3M655.5 339.2h-2.3" stroke="#555" stroke-width="1" fill="none"/>
<text class="tt" x="368.500" y="161.500" letter-spacing="0.25">Power Spectral Density of Preprocessed PPG Signal</text>
<text class="lb" x="539.500" y="376.500" text-anchor="middle">Frequency (Hz)</text>
<text class="lb" transform="translate(387.500,254.500) rotate(-90)" text-anchor="middle" letter-spacing="0.15">Power/Frequency (dB/Hz)</text>
<rect x="143.5" y="403.5" width="232.0" height="130.0" fill="#fff"/>
<path d="M220.8 403.5V533.5" stroke="#dfdfdf" stroke-width="1"/>
<path d="M298.2 403.5V533.5" stroke="#dfdfdf" stroke-width="1"/>
<path d="M143.5 446.8H375.5" stroke="#dfdfdf" stroke-width="1"/>
<path d="M143.5 490.2H375.5" stroke="#dfdfdf" stroke-width="1"/>
<path d="M143 483.8 143.4 484 144 484.1 144.8 484.5 145.5 485.5 146.2 487.5 147 491 147.7 495.8 148.5 501.1 149.2 506.1 150 510 150.6 512.7 151.1 514.6 151.7 516.1 152.5 517.1 153.8 518 155.6 518.5 157.8 518.6 160.3 518.5 162.8 518.3 165 518.2 167 518.3 168.9 518.4 170.7 518.4 172.4 518.6 173.8 518.8 174.8 519.2 175.6 519.9 176.3 520.6 176.9 520.9 177.5 520.5 178.1 519.9 178.7 519.2 179.3 517.8 179.9 515 180.5 510 181.1 501.8 181.8 490.8 182.5 478.7 183.1 467.1 183.8 457.5 184.3 450.2 184.8 444 185.2 438.7 185.7 434.1 186.2 430 186.8 426.3 187.4 423.2 188 420.7 188.6 418.9 189.2 418 189.9 418 190.5 418.8 191.2 420.4 191.8 422.5 192.5 425 193.2 428.1 194 431.9 194.7 436.2 195.5 440.6 196.2 445 197 449.4 197.8 454.1 198.5 458.8 199.2 463.4 200 467.5 200.8 471.4 201.6 475.1 202.3 478.4 203.1 481.4 203.8 483.8 204.3 485.3 204.7 486.1 205 486.5 205.5 486.9 206.2 487.5 207.3 488.3 208.5 489.1 209.9 490 211.3 490.9 212.5 492 213.6 493.2 214.6 494.5 215.6 495.9 216.5 497.3 217.5 498.8 218.5 500.2 219.4 501.8 220.4 503.3 221.4 504.8 222.5 506.2 223.7 507.6 224.9 508.9 226.2 510.1 227.5 511.3 228.8 512.5 230.1 513.9 231.4 515.4 232.8 516.8 234 517.8 235 518 235.7 517.6 236.3 516.8 236.7 515.4 237.1 513.2 237.5 510 238 505.3 238.4 499.3 238.9 492.7 239.4 486 240 480 240.7 474.4 241.4 468.8 242.2 463.5 243 458.8 243.8 455 244.4 452.1 245 449.9 245.6 448.4 246.1 447.5 246.8 447 247.4 447.1 248 447.8 248.7 449 249.3 450.6 250 452.5 250.7 454.9 251.5 457.7 252.2 460.9 253 464.2 253.8 467.5 254.5 470.9 255.2 474.6 256 478.2 256.8 481.8 257.5 485 258.2 487.9 259 490.7 259.8 493.3 260.5 495.6 261.2 497.5 262 499.1 262.7 500.3 263.4 501.2 264.2 501.9 265 502.5 265.9 502.8 266.9 502.7 267.9 502.6 269 502.4 270 502.5 271 502.8 272 503.2 273 503.7 274 504.3 275 505 276 505.9 277 506.9 278 508.1 279 509.1 280 510 281 510.6 282 511.1 283 511.5 284 511.9 285 512.5 286 513.4 287.1 514.6 288.2 515.8 289.2 516.6 290 516.8 290.7 516.4 291.2 515.7 291.6 514.5 292 512.7 292.5 510 293 506.3 293.5 501.8 294 496.6 294.5 490.9 295 485 295.6 478.3 296.2 470.8 296.8 463.1 297.4 456 298 450 298.5 445.4 299.1 441.6 299.6 438.5 300 435.9 300.5 433.8 300.9 432 301.3 430.7 301.7 429.9 302.1 429.5 302.5 429.5 302.9 429.7 303.4 430.2 303.9 431.1 304.4 432.7 305 435 305.7 438.4 306.4 442.7 307.2 447.5 308 452.6 308.8 457.5 309.5 462.5 310.2 467.8 311 473.1 311.8 478.1 312.5 482.5 313.2 486.3 313.9 489.6 314.7 492.6 315.4 495.2 316.2 497.5 317.1 499.3 318.1 500.8 319.1 501.9 320.1 502.8 321.2 503.8 322.4 504.6 323.7 505.3 324.9 505.9 326.2 506.6 327.5 507.5 328.8 508.6 330 509.8 331.2 511.1 332.5 512.5 333.8 513.8 335 515 336.3 516.4 337.6 517.7 338.8 518.9 340 520 341.1 521.1 342.2 522.2 343.2 523.1 344.2 523.7 345 523.8 345.7 523.5 346.2 523 346.6 522 347 520.3 347.5 517.5 348 513.4 348.5 508.2 349 502.2 349.5 496 350 490 350.5 484 351 477.6 351.5 471.2 352 465.2 352.5 460 353.1 455.5 353.7 451.5 354.3 447.9 354.9 445 355.5 442.5 356 440.7 356.5 439.4 357 438.7 357.5 438.3 358 438.2 358.6 438.4 359.2 438.9 359.9 439.8 360.6 441 361.2 442.5 362 444.4 362.7 446.8 363.5 449.4 364.2 452.2 365 455 365.8 457.8 366.5 460.8 367.2 463.8 368 466.9 368.8 470 369.5 473.3 370.3 476.9 371 480.4 371.8 483.6 372.5 486.2 373.2 488.2 374 489.8 374.7 490.9 375.3 491.8 375.8 492.5" fill="none" stroke="#2a2acc" stroke-width="1" stroke-linejoin="round"/>
<rect x="143.5" y="403.5" width="232.0" height="130.0" fill="none" stroke="#555" stroke-width="1"/>
<text class="tk" x="143.5" y="550" text-anchor="middle">25</text>
<text class="tk" x="220.8" y="550" text-anchor="middle">26</text>
<text class="tk" x="298.2" y="550" text-anchor="middle">27</text>
<text class="tk" x="375.5" y="550" text-anchor="middle">28</text>
<text class="tk" x="138.5" y="407.8" text-anchor="end">1</text>
<text class="tk" x="138.5" y="451.1" text-anchor="end">0.5</text>
<text class="tk" x="138.5" y="494.5" text-anchor="end">0</text>
<text class="tk" x="138.5" y="537.8" text-anchor="end">-0.5</text>
<path d="M143.5 533.5v-2.3M143.5 403.5v2.3M220.8 533.5v-2.3M220.8 403.5v2.3M298.2 533.5v-2.3M298.2 403.5v2.3M375.5 533.5v-2.3M375.5 403.5v2.3M143.5 403.5h2.3M375.5 403.5h-2.3M143.5 446.8h2.3M375.5 446.8h-2.3M143.5 490.2h2.3M375.5 490.2h-2.3M143.5 533.5h2.3M375.5 533.5h-2.3" stroke="#555" stroke-width="1" fill="none"/>
<text class="tt" x="259.5" y="397" text-anchor="middle">PPG Signal</text>
<text class="lb" x="259.5" y="566.500" text-anchor="middle">Time (s)</text>
<text class="lb" transform="translate(114,468.500) rotate(-90)" text-anchor="middle">Amplitude</text>
<rect x="423.5" y="403.5" width="232.0" height="130.0" fill="#fff"/>
<path d="M500.8 403.5V533.5" stroke="#dfdfdf" stroke-width="1"/>
<path d="M578.2 403.5V533.5" stroke="#dfdfdf" stroke-width="1"/>
<path d="M423.5 446.8H655.5" stroke="#dfdfdf" stroke-width="1"/>
<path d="M423.5 490.2H655.5" stroke="#dfdfdf" stroke-width="1"/>
<path d="M423 483.8 423.4 484 424 484.1 424.8 484.5 425.5 485.5 426.2 487.5 427 491 427.7 495.8 428.5 501.1 429.2 506.1 430 510 430.6 512.7 431.1 514.6 431.7 516.1 432.5 517.1 433.8 518 435.6 518.5 437.8 518.6 440.3 518.5 442.8 518.3 445 518.2 447 518.3 448.9 518.4 450.7 518.4 452.4 518.6 453.8 518.8 454.8 519.2 455.6 519.9 456.3 520.6 456.9 520.9 457.5 520.5 458.1 519.9 458.7 519.2 459.3 517.8 459.9 515 460.5 510 461.1 501.8 461.8 490.8 462.5 478.7 463.1 467.1 463.8 457.5 464.3 450.2 464.8 444 465.2 438.7 465.7 434.1 466.2 430 466.8 426.3 467.4 423.2 468 420.7 468.6 418.9 469.2 418 469.9 418 470.5 418.8 471.2 420.4 471.8 422.5 472.5 425 473.2 428.1 474 431.9 474.7 436.2 475.5 440.6 476.2 445 477 449.4 477.8 454.1 478.5 458.8 479.2 463.4 480 467.5 480.8 471.4 481.6 475.1 482.3 478.4 483.1 481.4 483.8 483.8 484.3 485.3 484.7 486.1 485 486.5 485.5 486.9 486.2 487.5 487.3 488.3 488.5 489.1 489.9 490 491.3 490.9 492.5 492 493.6 493.2 494.6 494.5 495.6 495.9 496.5 497.3 497.5 498.8 498.5 500.2 499.4 501.8 500.4 503.3 501.4 504.8 502.5 506.2 503.7 507.6 504.9 508.9 506.2 510.1 507.5 511.3 508.8 512.5 510.1 513.9 511.4 515.4 512.8 516.8 514 517.8 515 518 515.7 517.6 516.3 516.8 516.7 515.4 517.1 513.2 517.5 510 518 505.3 518.4 499.3 518.9 492.7 519.4 486 520 480 520.7 474.4 521.4 468.8 522.2 463.5 523 458.8 523.8 455 524.4 452.1 525 449.9 525.6 448.4 526.1 447.5 526.8 447 527.4 447.1 528 447.8 528.7 449 529.3 450.6 530 452.5 530.7 454.9 531.5 457.7 532.2 460.9 533 464.2 533.8 467.5 534.5 470.9 535.2 474.6 536 478.2 536.8 481.8 537.5 485 538.2 487.9 539 490.7 539.8 493.3 540.5 495.6 541.2 497.5 542 499.1 542.7 500.3 543.4 501.2 544.2 501.9 545 502.5 545.9 502.8 546.9 502.7 547.9 502.6 549 502.4 550 502.5 551 502.8 552 503.2 553 503.7 554 504.3 555 505 556 505.9 557 506.9 558 508.1 559 509.1 560 510 561 510.6 562 511.1 563 511.5 564 511.9 565 512.5 566 513.4 567.1 514.6 568.2 515.8 569.2 516.6 570 516.8 570.7 516.4 571.2 515.7 571.6 514.5 572 512.7 572.5 510 573 506.3 573.5 501.8 574 496.6 574.5 490.9 575 485 575.6 478.3 576.2 470.8 576.8 463.1 577.4 456 578 450 578.5 445.4 579.1 441.6 579.6 438.5 580 435.9 580.5 433.8 580.9 432 581.3 430.7 581.7 429.9 582.1 429.5 582.5 429.5 582.9 429.7 583.4 430.2 583.9 431.1 584.4 432.7 585 435 585.7 438.4 586.4 442.7 587.2 447.5 588 452.6 588.8 457.5 589.5 462.5 590.2 467.8 591 473.1 591.8 478.1 592.5 482.5 593.2 486.3 593.9 489.6 594.7 492.6 595.4 495.2 596.2 497.5 597.1 499.3 598.1 500.8 599.1 501.9 600.1 502.8 601.2 503.8 602.4 504.6 603.7 505.3 604.9 505.9 606.2 506.6 607.5 507.5 608.8 508.6 610 509.8 611.2 511.1 612.5 512.5 613.8 513.8 615 515 616.3 516.4 617.6 517.7 618.8 518.9 620 520 621.1 521.1 622.2 522.2 623.2 523.1 624.2 523.7 625 523.8 625.7 523.5 626.2 523 626.6 522 627 520.3 627.5 517.5 628 513.4 628.5 508.2 629 502.2 629.5 496 630 490 630.5 484 631 477.6 631.5 471.2 632 465.2 632.5 460 633.1 455.5 633.7 451.5 634.3 447.9 634.9 445 635.5 442.5 636 440.7 636.5 439.4 637 438.7 637.5 438.3 638 438.2 638.6 438.4 639.2 438.9 639.9 439.8 640.6 441 641.2 442.5 642 444.4 642.7 446.8 643.5 449.4 644.2 452.2 645 455 645.8 457.8 646.5 460.8 647.2 463.8 648 466.9 648.8 470 649.5 473.3 650.3 476.9 651 480.4 651.8 483.6 652.5 486.2 653.2 488.2 654 489.8 654.7 490.9 655.3 491.8 655.8 492.5" fill="none" stroke="#2a2acc" stroke-width="1" stroke-linejoin="round"/>
<circle cx="423" cy="484" r="4" fill="none" stroke="#e2282c" stroke-width="1"/>
<circle cx="439" cy="518.5" r="4" fill="none" stroke="#e2282c" stroke-width="1"/>
<circle cx="445" cy="518.5" r="4" fill="none" stroke="#e2282c" stroke-width="1"/>
<circle cx="452.5" cy="518.8" r="4" fill="none" stroke="#e2282c" stroke-width="1"/>
<circle cx="469.8" cy="418" r="4" fill="none" stroke="#e2282c" stroke-width="1"/>
<circle cx="527" cy="447" r="4" fill="none" stroke="#e2282c" stroke-width="1"/>
<circle cx="549.5" cy="502.2" r="4" fill="none" stroke="#e2282c" stroke-width="1"/>
<circle cx="582.5" cy="429.5" r="4" fill="none" stroke="#e2282c" stroke-width="1"/>
<circle cx="638" cy="438.2" r="4" fill="none" stroke="#e2282c" stroke-width="1"/>
<rect x="423.5" y="403.5" width="232.0" height="130.0" fill="none" stroke="#555" stroke-width="1"/>
<text class="tk" x="423.5" y="550" text-anchor="middle">25</text>
<text class="tk" x="500.8" y="550" text-anchor="middle">26</text>
<text class="tk" x="578.2" y="550" text-anchor="middle">27</text>
<text class="tk" x="655.5" y="550" text-anchor="middle">28</text>
<text class="tk" x="418.5" y="407.8" text-anchor="end">1</text>
<text class="tk" x="418.5" y="451.1" text-anchor="end">0.5</text>
<text class="tk" x="418.5" y="494.5" text-anchor="end">0</text>
<text class="tk" x="418.5" y="537.8" text-anchor="end">-0.5</text>
<path d="M423.5 533.5v-2.3M423.5 403.5v2.3M500.8 533.5v-2.3M500.8 403.5v2.3M578.2 533.5v-2.3M578.2 403.5v2.3M655.5 533.5v-2.3M655.5 403.5v2.3M423.5 403.5h2.3M655.5 403.5h-2.3M423.5 446.8h2.3M655.5 446.8h-2.3M423.5 490.2h2.3M655.5 490.2h-2.3M423.5 533.5h2.3M655.5 533.5h-2.3" stroke="#555" stroke-width="1" fill="none"/>
<text class="tt" x="539.5" y="397" text-anchor="middle">PPG Signal Peaks</text>
<text class="lb" x="539.5" y="566.500" text-anchor="middle">Time (s)</text>
<text class="lb" transform="translate(394,468.500) rotate(-90)" text-anchor="middle">Amplitude</text>
</svg>
<div class="a fw" style="left:718.5px;top:269.8px;width:584.5px;height:523.8px;background:#f0f0f0;border:1px solid #6a6a68"></div>
<div class="a" style="left:718.5px;top:269.8px;width:584.5px;height:31.8px;background:#4a4846"></div>
<svg class="a" style="left:725.5px;top:277.5px" width="18" height="17" viewBox="0 0 18 17">
<rect x="0.500" y="0.500" width="17" height="16" fill="#fff" stroke="#b8c4d4"/><rect x="1" y="1" width="16" height="2.500" fill="#6f8fb8"/>
<path d="M3 10.500L6 9C7.500 7.500 8.500 5 9.500 4C10.500 5.500 11.500 8.500 14.500 12.500C13 12.500 11.500 13.500 10.500 15C9.500 13.500 8.500 12 7.800 11L5.500 13Z" fill="#d4582a"/>
<path d="M3 10.500L6 9L7.800 11L5.500 13Z" fill="#4b7bb5"/><path d="M9.500 4C10.500 5.500 11.500 8.500 14.500 12.500C13 12.500 11.500 13.500 10.500 15C10.800 11 10.500 7 9.500 4Z" fill="#f0a030"/></svg>
<div class="t" style="left:747.1px;top:279.40000000000003px;font-size:12.3px;letter-spacing:-0.216px;color:#fff">Figure 2</div>
<svg class="a" style="left:1163.0px;top:270.8px" width="140" height="31" viewBox="0 0 140 31"><path d="M13 15.5h10" stroke="#fff" stroke-width="1"/><rect x="61.500" y="10.5" width="10" height="10" fill="none" stroke="#fff" stroke-width="1"/><path d="M110 10.5l10 10M120 10.5l-10 10" stroke="#fff" stroke-width="1.100"/></svg>
<div class="a" style="left:719.5px;top:301.6px;width:582.5px;height:24.7px;background:#fff"></div>
<div class="t mn" style="left:725.7px;top:308.1px;letter-spacing:-0.439px">File</div>
<div class="t mn" style="left:758.3px;top:308.1px;letter-spacing:-0.187px">Edit</div>
<div class="t mn" style="left:793.7px;top:308.1px;letter-spacing:-0.069px">View</div>
<div class="t mn" style="left:834.8px;top:308.1px;letter-spacing:-0.211px">Insert</div>
<div class="t mn" style="left:879.0px;top:308.1px;letter-spacing:-0.037px">Tools</div>
<div class="t mn" style="left:923.2px;top:308.1px;letter-spacing:-0.123px">Desktop</div>
<div class="t mn" style="left:981.9px;top:308.1px;letter-spacing:0.255px">Window</div>
<div class="t mn" style="left:1041.6px;top:308.1px;letter-spacing:0.07px">Help</div>
<svg class="a" style="left:1290.0px;top:309.5px" width="8" height="8" viewBox="0 0 8 8"><path d="M0.500 1l5 4.500M6.500 1.500v5h-5" stroke="#111" stroke-width="1.800" fill="none"/></svg>
<div class="a" style="left:719.5px;top:326.3px;width:582.5px;height:27.5px;background:#f0f0f0;border-top:1px solid #e2e2e2;box-sizing:border-box"></div>
<div class="a" style="left:719.5px;top:353.8px;width:582.5px;height:1px;background:#a9a9a9"></div>
<svg class="a" style="left:718.5px;top:326.3px" width="240" height="28" viewBox="0 0 240 28"><g transform="translate(3,6)"><path d="M2.500 1.500h8.500l3.500 3.500v10.500h-12z" fill="#fff" stroke="#7f9fc9"/><path d="M11 1.500v3.500h3.500" fill="#dce8f7" stroke="#7f9fc9"/><circle cx="2.500" cy="2.500" r="2.200" fill="#f08a3c"/></g>
<g transform="translate(26,6)"><path d="M0.500 4.500h5l1.500 1.500h8v9.500h-14.500z" fill="#f3d86b" stroke="#c09a2a"/><path d="M0.500 15.500l2.500-7.500h13l-2.500 7.500z" fill="#fbe88f" stroke="#c09a2a"/><path d="M9 3.500c2-2.500 4.500-2 5.500 0" fill="none" stroke="#8ea0b8" stroke-width="1.300"/><path d="M15.500 1.500v3h-3" fill="none" stroke="#8ea0b8" stroke-width="1.200"/></g>
<g transform="translate(50,6)"><path d="M1 1.500h13.500v14h-12l-1.500-1.500z" fill="#4a4fb5" stroke="#2f3390"/><rect x="3.500" y="2" width="8.500" height="6" fill="#dfe3f7"/><rect x="4.500" y="10.500" width="7" height="5" fill="#c9cde6"/><rect x="5.500" y="11.500" width="2.500" height="3.500" fill="#2f3390"/></g>
<g transform="translate(73,6)"><path d="M4.500 1l7-0.500l1.500 6h-9.500z" fill="#f4f7fb" stroke="#9aa7b8"/><path d="M1 7.500l3-2h9l2.500 2v5l-3 2.500h-9l-2.500-2.500z" fill="#c8ccd2" stroke="#8d949e"/><path d="M3.500 11.500h9.500l-1.500 3h-6.500z" fill="#f4f4f4" stroke="#9aa0a8" stroke-width="0.800"/></g>
<path d="M96.500 4v22M126.500 4v22M179.500 4v22" stroke="#c9c9c9"/>
<g transform="translate(102,6)"><rect x="3.500" y="0.500" width="13" height="10" fill="#eaf0fa" stroke="#4a5f8f" stroke-width="1.400"/><rect x="0.700" y="3.500" width="13" height="10" fill="#f7f9fd" stroke="#4a5f8f" stroke-width="1.400"/><rect x="4" y="11" width="6" height="4" rx="2" fill="none" stroke="#6a87b5" stroke-width="1.500"/><rect x="8.500" y="11" width="7" height="4" rx="2" fill="none" stroke="#6a87b5" stroke-width="1.500"/></g>
<g transform="translate(135,6)"><defs><linearGradient id="cbg" x1="0" y1="0" x2="0" y2="1"><stop offset="0" stop-color="#6aa5e8"/><stop offset="0.500" stop-color="#9fd6c8"/><stop offset="1" stop-color="#f3d77a"/></linearGradient></defs><rect x="1" y="0.800" width="10.500" height="15" rx="1" fill="url(#cbg)" stroke="#5a6fa8" stroke-width="1.400"/></g>
<g transform="translate(156,6)"><rect x="0.700" y="0.700" width="15" height="14.600" fill="#f4f6fb" stroke="#4f64a5" stroke-width="1.400"/><rect x="3" y="3.500" width="4.500" height="3.500" fill="#e0575a"/><rect x="3" y="9.500" width="4.500" height="3.500" fill="#5560d0"/><path d="M9.500 5.200h4.500M9.500 11.200h4.500" stroke="#333" stroke-width="1.300"/></g>
<g transform="translate(191,6)"><path d="M1 0.500v13l3-2.800l2.200 5l2-0.900l-2.200-4.800h4.200z" fill="#fff" stroke="#111" stroke-width="1.200" stroke-linejoin="round"/></g>
<g transform="translate(210,6)"><rect x="0.600" y="0.600" width="16" height="15" fill="#fdfdfd" stroke="#7d8793" stroke-width="1.200"/><rect x="0.600" y="0.600" width="16" height="2.800" fill="#7d9ac0"/><path d="M8.500 3.500v12" stroke="#7d8793"/><path d="M10.500 6.500h4.500M10.500 9.500h4.500M10.500 12.500h4.500" stroke="#444" stroke-width="1.300"/></g></svg>
<svg class="a" style="left:719.5px;top:354.8px;overflow:hidden" width="582.5" height="437.79999999999995" viewBox="719.5 354.8 582.5 437.79999999999995">
<rect x="795.5" y="388.5" width="452.0" height="356.0" fill="#fff"/>
<path d="M795.7 432.3 796 434.5 796.4 437.4 797 442.2 797.5 450 798.1 462.1 798.7 477.7 799.4 494.4 800 510 800.6 524.6 801.3 539.1 801.9 552.9 802.5 565 803.1 575.4 803.6 584.5 804.2 592.3 804.7 598.8 805.2 603.7 805.6 607 806 609.5 806.5 612 806.9 614.4 807.4 616.3 807.9 618.1 808.5 620 809.3 621.8 810.3 623.5 811.4 625.5 812.4 628 813.4 631.2 814.3 634.8 815.3 638.9 816.3 643.3 817.3 648.3 818.2 653.7 819.2 659.4 820.2 664.7 821.3 669.7 822.5 674.7 823.7 679.4 824.8 684 825.9 688.9 827 694.1 827.9 698.3 828.7 700.3 829.2 700.7 829.4 699.9 829.6 696.3 829.9 688.3 830.3 673.7 830.8 653.9 831.2 632.9 831.7 614.5 832.2 599.9 832.7 587 833.2 574.9 833.7 563.1 834.2 550.6 834.6 538.2 835 527.1 835.4 518.7 835.8 513.6 836.2 511 836.5 510 836.9 509.7 837.3 509.5 837.7 510 838.1 512.1 838.5 516.7 839 524.3 839.5 534.4 840.1 546.1 840.7 559 841.4 574.1 842.2 591.4 843.1 608.2 843.9 621.7 844.7 630.8 845.4 637.1 846.2 641.8 846.9 646 847.6 649.7 848.2 652.3 848.8 654.3 849.4 656 849.9 657.3 850.4 658.1 850.8 658.6 851.4 659 852.1 659.2 852.8 659.2 853.6 659.2 854.4 659.5 855.1 660 855.8 660.6 856.6 661.6 857.4 663 858.3 665 859.3 667.4 860.4 670.2 861.4 673.3 862.5 677.2 863.5 681.7 864.6 686 865.4 689.1 866 690.6 866.4 691 866.7 691 867.1 691.6 867.5 693.3 867.9 695.5 868.3 697.3 868.6 697.6 868.9 697.8 869.2 697.8 869.5 694.8 869.8 685.6 870.2 667.2 870.7 641.9 871.1 615 871.6 591.7 872.1 573.5 872.5 557.6 873.1 542.9 873.6 528.2 874.2 512.4 874.9 496.3 875.6 482 876.2 471.3 876.7 465.3 877 462.8 877.3 462.3 877.7 462.3 878.1 461.7 878.5 461.5 878.9 463.5 879.3 469.3 879.8 479.9 880.3 494.2 880.9 511 881.5 528.9 882.2 549.4 883.1 572.6 883.9 595.1 884.7 613.6 885.5 626.9 886.2 637 887 644.7 887.7 651 888.3 655.5 889 657.8 889.6 659.2 890.2 661 890.9 663.3 891.6 665.5 892.4 667.7 893.2 670 894 672.4 894.8 674.9 895.7 677.4 896.7 680 898 682.5 899.4 684.9 900.9 687.6 902.2 690.5 903.4 694.1 904.5 698.2 905.5 702.2 906.2 705.3 906.6 707.4 906.8 708.7 906.8 709.8 907 711 907.3 712.9 907.7 715.1 908.1 716.8 908.5 717 908.8 717.1 909.1 717.1 909.4 714.1 909.7 705 910.1 686.9 910.6 662.1 911 635.7 911.5 612.9 912 595 912.4 579.4 912.9 564.8 913.5 550.4 914.2 534.9 914.9 519.2 915.7 505.1 916.3 494.6 916.8 488.7 917.1 486.2 917.4 485.6 917.8 485.6 918.2 485.4 918.6 485.9 919 488 919.4 492.6 919.9 500.1 920.4 510 921 521.6 921.6 534.2 922.3 549.2 923.1 566.3 924 582.9 924.8 596.1 925.6 605.1 926.3 611.3 927.1 615.9 927.8 620 928.4 623.5 929 625.9 929.7 627.9 930.3 630 931 632.3 931.7 634.5 932.5 636.7 933.3 639 934.1 641.1 934.9 643.1 935.8 645.5 936.8 649 938.1 654 939.5 660.1 941 666.5 942.3 672.6 943.5 678.6 944.6 684.5 945.5 690.1 946.3 694.9 946.8 698.6 947.2 701.6 947.4 704.1 947.7 706.3 948.1 708.6 948.5 710.8 948.8 712.2 949.2 712.3 949.5 712.5 949.8 712.5 950.1 709.5 950.4 700.3 950.8 681.9 951.3 656.6 951.7 629.7 952.2 606.4 952.7 588.2 953.2 572.3 953.7 557.6 954.2 542.9 954.8 527.1 955.5 511 956.2 496.7 956.8 486 957.2 480 957.6 477.5 957.9 477 958.3 477 958.7 476.6 959.1 476.7 959.5 478.8 959.9 484 960.4 493.2 960.9 505.5 961.5 519.9 962.1 535.4 962.8 553.4 963.6 573.8 964.5 593.7 965.3 609.8 966.1 621.1 966.8 629.4 967.6 635.7 968.3 641 968.9 645 969.5 647.4 970.2 649.1 970.8 651 971.5 653.3 972.2 655.5 973 657.7 973.8 660 974.6 662.2 975.4 664.4 976.3 666.9 977.3 670 978.6 673.9 980 678.4 981.5 683.2 982.8 688 984 692.9 985 698.1 986 703 986.8 707 987.4 710.1 987.8 712.3 988.1 714.2 988.4 716 988.8 718.1 989.2 720.3 989.5 721.8 989.9 722 990.2 722 990.5 721.7 990.8 718.6 991.1 710 991.5 693.2 992 670.3 992.4 645.9 992.9 624.7 993.4 608.1 993.9 593.4 994.4 579.8 994.9 566.3 995.4 552 995.9 537.5 996.4 524.5 996.8 514.8 997.2 509.2 997.6 506.6 997.9 505.9 998.3 505.8 998.7 505.6 999.1 506.2 999.5 508.3 999.9 512.8 1000.4 520.1 1000.9 529.6 1001.5 540.8 1002.1 553.1 1002.8 567.6 1003.6 584.2 1004.5 600.3 1005.3 613.2 1006.1 621.8 1006.8 627.7 1007.6 632.1 1008.3 636 1009 639.5 1009.6 642.1 1010.2 644.2 1010.8 646 1011.4 647.6 1012 648.9 1012.6 649.9 1013.3 651 1013.9 651.8 1014.5 652.4 1015.3 653.3 1016.3 655 1017.7 657.8 1019.5 661.4 1021.3 665.4 1022.8 669.6 1024 674.5 1025.1 679.9 1026 685.1 1026.8 689 1027.4 691.3 1027.9 692.5 1028.3 693.3 1028.7 694.3 1029.1 696.2 1029.5 698.4 1029.9 700 1030.2 700.3 1030.5 700.2 1030.8 699.7 1031.1 696.5 1031.4 688.3 1031.8 672.6 1032.2 651.1 1032.7 628.4 1033.2 608.6 1033.7 592.9 1034.1 579.1 1034.6 566.3 1035.2 553.6 1035.9 540.1 1036.7 526.7 1037.5 514.6 1038.1 505.5 1038.6 500.1 1038.9 497.6 1039.3 496.7 1039.6 496.5 1040 496.4 1040.4 497 1040.8 499.1 1041.2 503.5 1041.7 510.5 1042.2 519.8 1042.8 530.7 1043.4 542.5 1044.1 556.7 1045 572.9 1045.8 588.6 1046.6 601.1 1047.4 609.5 1048.1 615.1 1048.9 619.2 1049.6 623 1050.2 626.4 1050.8 628.8 1051.5 630.8 1052.1 633 1052.8 635.3 1053.5 637.5 1054.3 639.7 1055.1 642 1055.9 644.2 1056.7 646.4 1057.6 648.9 1058.6 652 1059.9 655.9 1061.3 660.5 1062.8 665.3 1064.1 670.1 1065.3 675 1066.4 680.2 1067.3 685.1 1068.1 689.2 1068.6 692.2 1068.9 694.5 1069.1 696.4 1069.4 698.2 1069.8 700.3 1070.2 702.5 1070.5 704 1070.9 704.2 1071.2 704 1071.5 703.5 1071.8 700.3 1072.1 692.2 1072.5 676.6 1073 655.4 1073.4 632.9 1073.9 613.3 1074.4 597.8 1074.9 584.1 1075.4 571.4 1075.9 558.8 1076.5 545.6 1077.2 532.2 1077.9 520.3 1078.5 511.3 1079 506 1079.3 503.4 1079.6 502.5 1080 502.3 1080.4 502.1 1080.8 502.5 1081.2 504.6 1081.6 509.3 1082.1 517 1082.6 527.3 1083.2 539.3 1083.8 552.4 1084.5 567.7 1085.4 585.4 1086.2 602.4 1087 616.1 1087.8 625.4 1088.5 631.9 1089.3 636.7 1090 641 1090.6 644.6 1091.2 647 1091.9 648.9 1092.5 651 1093.2 653.3 1093.9 655.5 1094.7 657.7 1095.5 660 1096.3 662.3 1097.1 664.5 1098 666.9 1099 670 1100.3 673.8 1101.7 678.2 1103.2 682.9 1104.5 687.6 1105.7 692.5 1106.7 697.6 1107.7 702.4 1108.5 706.4 1109.1 709.4 1109.5 711.6 1109.8 713.4 1110.1 715.2 1110.5 717.3 1110.9 719.5 1111.2 721 1111.6 721.2 1111.9 721.4 1112.2 721.4 1112.5 718.3 1112.8 709.2 1113.2 690.9 1113.6 665.9 1114.1 639.3 1114.6 616.2 1115.1 598.2 1115.5 582.4 1116 567.8 1116.6 553.2 1117.3 537.6 1118 521.7 1118.7 507.5 1119.3 496.9 1119.8 490.9 1120.1 488.4 1120.4 487.9 1120.8 487.9 1121.2 487.7 1121.6 488.3 1122 490.4 1122.4 494.9 1122.9 502.3 1123.4 512 1124 523.4 1124.6 535.8 1125.3 550.5 1126.1 567.4 1127 583.7 1127.8 596.7 1128.6 605.5 1129.3 611.5 1130.1 616 1130.8 620 1131.4 623.5 1132 625.9 1132.7 627.9 1133.3 630 1134 632.3 1134.7 634.5 1135.5 636.7 1136.3 639 1137.1 641.2 1137.9 643.2 1138.8 645.7 1139.8 649 1141.1 653.5 1142.5 658.9 1144 664.6 1145.3 670.1 1146.5 675.6 1147.5 681.2 1148.5 686.5 1149.3 691 1149.9 694.4 1150.4 697.1 1150.8 699.3 1151.2 701.3 1151.6 703.5 1152 705.7 1152.4 707.2 1152.7 707.3 1153 707.4 1153.3 707.4 1153.6 704.3 1153.9 695.3 1154.3 677.4 1154.8 653 1155.2 626.9 1155.7 604.4 1156.2 586.7 1156.7 571.3 1157.2 556.9 1157.7 542.6 1158.3 527.3 1159 511.8 1159.6 498 1160.2 487.6 1160.6 481.7 1161 479.2 1161.3 478.6 1161.7 478.6 1162.1 478.3 1162.5 478.6 1162.9 480.6 1163.3 485.6 1163.8 494.1 1164.3 505.5 1164.9 518.8 1165.5 533.2 1166.2 550 1167 569.1 1167.9 587.7 1168.7 602.6 1169.5 613.1 1170.2 620.5 1171 626.2 1171.7 631 1172.3 634.8 1173 637.2 1173.6 639 1174.2 641 1174.9 643.3 1175.6 645.5 1176.4 647.7 1177.2 650 1178 652 1178.8 653.8 1179.7 656.2 1180.7 660 1182 665.7 1183.4 672.9 1184.9 680.5 1186.2 687.6 1187.4 694.2 1188.4 700.8 1189.4 706.8 1190.2 712.1 1190.8 716.4 1191.2 719.8 1191.5 722.8 1191.9 725.3 1192.3 727.7 1192.7 729.9 1193.1 731.2 1193.4 731.3 1193.7 731.6 1194 731.8 1194.3 728.7 1194.6 719.3 1195 700.2 1195.5 673.9 1195.9 645.9 1196.4 621.8 1196.9 602.9 1197.3 586.5 1197.8 571.3 1198.4 556.1 1199.1 539.6 1199.9 522.9 1200.7 508 1201.4 496.9 1201.9 490.7 1202.2 488.3 1202.6 487.8 1202.9 487.9 1203.3 487.6 1203.7 488.1 1204.1 490.1 1204.5 494.9 1205 502.9 1205.5 513.5 1206.1 525.9 1206.7 539.4 1207.4 555.3 1208.3 573.3 1209.1 590.9 1209.9 605 1210.7 614.6 1211.4 621.5 1212.2 626.5 1212.9 631 1213.5 634.7 1214.2 637.1 1214.8 638.9 1215.4 641 1216.1 643.3 1216.8 645.5 1217.6 647.7 1218.4 650 1219.2 652.2 1220 654.3 1220.9 656.7 1221.9 660 1223.2 664.4 1224.6 669.6 1226.1 675.1 1227.4 680.5 1228.6 685.9 1229.7 691.4 1230.6 696.6 1231.4 700.9 1231.9 704.3 1232.2 706.9 1232.3 709 1232.6 711 1233 713.2 1233.3 715.4 1233.7 716.9 1234.1 717 1234.4 717 1234.7 716.9 1235 713.8 1235.3 705 1235.7 687.9 1236.1 664.6 1236.6 639.5 1237.1 617 1237.6 597.6 1238.1 579.3 1238.6 562.3 1239.1 547 1239.6 533.5 1240.1 521.5 1240.6 511 1241.1 502 1241.5 494.4 1242 488.2 1242.3 483.4 1242.6 480" fill="none" stroke="#2b86c5" stroke-width="1" stroke-linejoin="round"/>
<rect x="795.5" y="388.5" width="452.0" height="356.0" fill="none" stroke="#3c3c3c" stroke-width="1"/>
<text class="tk2" x="795.5" y="765" text-anchor="middle">0</text>
<text class="tk2" x="840.7" y="765" text-anchor="middle">100</text>
<text class="tk2" x="885.9" y="765" text-anchor="middle">200</text>
<text class="tk2" x="931.1" y="765" text-anchor="middle">300</text>
<text class="tk2" x="976.3" y="765" text-anchor="middle">400</text>
<text class="tk2" x="1021.5" y="765" text-anchor="middle">500</text>
<text class="tk2" x="1066.7" y="765" text-anchor="middle">600</text>
<text class="tk2" x="1111.9" y="765" text-anchor="middle">700</text>
<text class="tk2" x="1157.1" y="765" text-anchor="middle">800</text>
<text class="tk2" x="1202.3" y="765" text-anchor="middle">900</text>
<text class="tk2" x="1247.5" y="765" text-anchor="middle">1000</text>
<text class="tk2" x="788" y="392.8" text-anchor="end">1</text>
<text class="tk2" x="788" y="511.5" text-anchor="end">0.5</text>
<text class="tk2" x="788" y="630.1" text-anchor="end">0</text>
<text class="tk2" x="788" y="748.8" text-anchor="end">-0.5</text>
<path d="M795.5 744.5v-4.5M795.5 388.5v4.5M840.7 744.5v-4.5M840.7 388.5v4.5M885.9 744.5v-4.5M885.9 388.5v4.5M931.1 744.5v-4.5M931.1 388.5v4.5M976.3 744.5v-4.5M976.3 388.5v4.5M1021.5 744.5v-4.5M1021.5 388.5v4.5M1066.7 744.5v-4.5M1066.7 388.5v4.5M1111.9 744.5v-4.5M1111.9 388.5v4.5M1157.1 744.5v-4.5M1157.1 388.5v4.5M1202.3 744.5v-4.5M1202.3 388.5v4.5M1247.5 744.5v-4.5M1247.5 388.5v4.5M795.5 388.5h4.5M1247.5 388.5h-4.5M795.5 507.2h4.5M1247.5 507.2h-4.5M795.5 625.8h4.5M1247.5 625.8h-4.5M795.5 744.5h4.5M1247.5 744.5h-4.5" stroke="#3c3c3c" stroke-width="1" fill="none"/>
<circle cx="752.500" cy="405" r="1.500" fill="#d8262c"/>
</svg>
</body></html>
